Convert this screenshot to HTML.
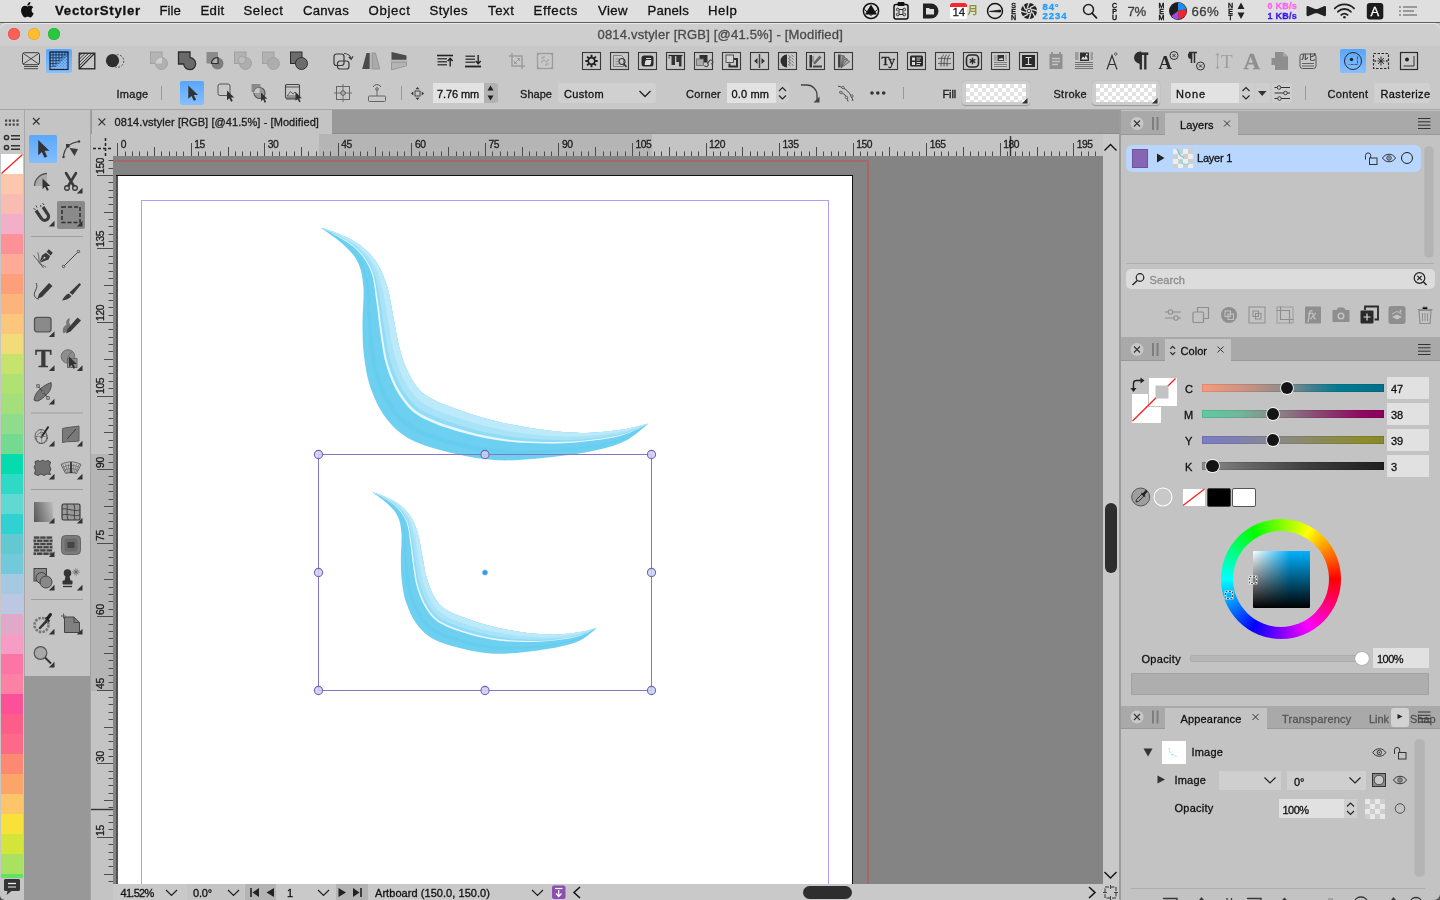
<!DOCTYPE html>
<html><head><meta charset="utf-8"><title>VectorStyler</title>
<style>
html,body{margin:0;padding:0;}
body{width:1440px;height:900px;overflow:hidden;position:relative;background:#c4c4c4;font-family:'Liberation Sans',sans-serif;-webkit-font-smoothing:antialiased;}
#root div{-webkit-text-stroke:0.3px;}
#root{position:absolute;left:0;top:0;width:1440px;height:900px;overflow:hidden;will-change:transform;}
</style></head><body><div id="root">
<!-- s_canvas -->
<div style="position:absolute;left:91px;top:110px;width:1029px;height:24px;background:#999;"></div><div style="position:absolute;left:92px;top:110px;width:240px;height:24px;background:#c4c4c4;"></div><div style="position:absolute;left:332px;top:133px;width:788px;height:1px;background:#8c8c8c;"></div><div style="position:absolute;left:114.5px;top:114.5px;white-space:nowrap;font-size:11px;line-height:15px;color:#1c1c1c;font-weight:400;letter-spacing:0.080px;">0814.vstyler [RGB] [@41.5%] - [Modified]</div><svg style="position:absolute;left:97px;top:117px;overflow:visible;" width="10" height="10" viewBox="0 0 10 10"><path d="M1.500,1.500L8.300,8.300M8.300,1.500L1.500,8.300" stroke="#333" stroke-width="1.100" fill="none"/></svg><div style="position:absolute;left:91px;top:134px;width:1012px;height:22px;background:#c4c4c4;"></div><div style="position:absolute;left:318.5px;top:134px;width:333.5px;height:22px;background:#b5b5b5;"></div><div style="position:absolute;left:91px;top:156px;width:22px;height:728px;background:#c4c4c4;"></div><div style="position:absolute;left:91px;top:454px;width:22px;height:236.5px;background:#b5b5b5;"></div><div style="position:absolute;left:113px;top:156px;width:990px;height:728px;background:#848484;"></div><div style="position:absolute;left:116.2px;top:174.8px;width:736.8px;height:725px;background:#111;"></div><div style="position:absolute;left:116.2px;top:176px;width:1.8px;height:724px;background:#505050;"></div><div style="position:absolute;left:118px;top:176px;width:734px;height:724px;background:#fff;"></div><div style="position:absolute;left:141.2px;top:199.6px;width:687.6px;height:701px;border:1.400px solid #b29cfb;box-sizing:border-box;"></div><div style="position:absolute;left:113px;top:160px;width:755.5px;height:2px;background:#a46868;"></div><div style="position:absolute;left:866.5px;top:160px;width:2px;height:724px;background:#a46868;"></div><svg style="position:absolute;left:0px;top:0px;overflow:visible;" width="1440" height="900" viewBox="0 0 1440 900"><defs><filter id="sb" x="-5%" y="-5%" width="110%" height="110%"><feGaussianBlur stdDeviation="0.450"/></filter></defs><g filter="url(#sb)"><path d="M320.4,227.4C324.0,230.1 336.0,237.8 342.2,243.6C348.4,249.4 354.3,254.9 357.8,262.2C361.3,269.4 362.6,276.7 363.4,287.1C364.2,297.5 362.4,313.1 362.5,324.5C362.6,335.9 362.7,345.2 364.0,355.6C365.3,366.0 366.6,376.3 370.2,386.7C373.8,397.1 379.1,409.0 385.8,417.8C392.6,426.6 399.3,433.6 410.7,439.6C422.1,445.6 439.7,450.2 454.2,453.6C468.7,457.1 482.8,459.6 497.8,460.3C512.9,461.0 529.0,459.3 544.5,457.8C560.0,456.3 577.9,453.9 591.1,451.2C604.4,448.5 614.4,446.1 624.0,441.5C633.6,436.9 644.6,426.4 648.7,423.4L648.7,423.4C644.3,424.4 631.9,428.1 622.3,429.6C612.7,431.2 601.5,432.3 591.1,432.7C580.7,433.1 572.4,433.0 560.0,431.8C547.6,430.6 531.0,428.5 516.5,425.6C502.0,422.8 487.4,419.4 472.9,414.7C458.4,410.0 439.7,403.8 429.3,397.6C418.9,391.4 415.6,385.4 410.7,377.3C405.8,369.2 402.6,359.2 399.8,349.3C397.0,339.4 395.7,328.6 393.6,318.2C391.5,307.8 390.2,296.4 387.3,287.1C384.4,277.8 381.4,269.4 376.5,262.2C371.6,254.9 364.6,248.5 357.8,243.6C351.1,238.7 342.2,235.4 336.0,232.7C329.8,230.0 323.0,228.3 320.4,227.4Z" fill="#6dd0f1"/><path d="M320.4,227.4C323.8,229.7 334.6,236.1 340.8,241.2C347.1,246.3 353.6,251.4 357.8,258.2C362.0,264.9 364.5,272.1 366.2,281.9C367.8,291.7 366.8,306.0 367.4,317.0C368.1,328.1 368.4,337.9 369.8,348.3C371.2,358.7 372.4,369.2 375.9,379.5C379.4,389.8 384.2,401.3 390.6,410.0C397.0,418.7 403.0,425.6 414.2,431.7C425.4,437.7 443.1,442.7 457.7,446.4C472.2,450.1 486.4,452.7 501.3,453.7C516.3,454.8 532.5,453.8 547.5,452.8C562.4,451.8 578.4,449.8 591.1,447.6C603.8,445.3 614.1,443.2 623.7,439.2C633.3,435.2 644.5,426.0 648.7,423.4L648.7,423.4C644.5,425.8 633.1,434.2 623.5,437.9C613.9,441.6 603.5,443.5 591.1,445.5C578.7,447.5 563.8,449.2 549.2,449.9C534.6,450.7 518.3,451.3 503.4,450.0C488.4,448.7 474.2,446.1 459.7,442.3C445.1,438.4 427.3,433.2 416.2,427.1C405.2,421.0 399.5,414.2 393.3,405.5C387.2,396.9 382.5,385.6 379.2,375.4C375.8,365.1 374.6,354.5 373.1,344.1C371.6,333.6 371.2,323.6 370.3,312.8C369.4,301.9 369.8,288.4 367.7,278.9C365.6,269.4 362.4,262.4 357.8,255.9C353.2,249.3 346.3,244.6 340.1,239.8C333.8,235.1 323.7,229.5 320.4,227.4Z" fill="#63cbee" fill-opacity="0.6"/><path d="M320.4,227.4C323.4,229.0 332.1,232.9 338.3,236.7C344.5,240.6 352.3,244.8 357.8,250.7C363.3,256.6 368.1,263.4 371.3,272.2C374.4,280.9 375.1,292.8 376.6,303.2C378.2,313.6 378.9,324.2 380.6,334.7C382.2,345.1 383.3,356.0 386.5,366.1C389.6,376.3 393.8,387.1 399.5,395.5C405.2,404.0 410.0,410.7 420.7,416.9C431.5,423.2 449.6,428.9 464.1,433.0C478.6,437.1 493.1,439.8 507.9,441.6C522.7,443.3 539.2,443.6 553.0,443.5C566.9,443.4 579.4,442.3 591.1,440.8C602.8,439.4 613.5,437.9 623.1,435.0C632.7,432.0 644.4,425.3 648.7,423.4L648.7,423.4C644.3,424.4 631.9,428.1 622.3,429.6C612.7,431.2 601.5,432.3 591.1,432.7C580.7,433.1 572.4,433.0 560.0,431.8C547.6,430.6 531.0,428.5 516.5,425.6C502.0,422.8 487.4,419.4 472.9,414.7C458.4,410.0 439.7,403.8 429.3,397.6C418.9,391.4 415.6,385.4 410.7,377.3C405.8,369.2 402.6,359.2 399.8,349.3C397.0,339.4 395.7,328.6 393.6,318.2C391.5,307.8 390.2,296.4 387.3,287.1C384.4,277.8 381.4,269.4 376.5,262.2C371.6,254.9 364.6,248.5 357.8,243.6C351.1,238.7 342.2,235.4 336.0,232.7C329.8,230.0 323.0,228.3 320.4,227.4Z" fill="#90dbf5"/><path d="M320.4,227.4C323.3,228.8 331.4,232.0 337.6,235.5C343.8,239.0 351.9,242.9 357.8,248.5C363.7,254.2 369.2,260.9 372.8,269.2C376.5,277.5 377.9,288.3 379.8,298.4C381.8,308.4 382.7,319.3 384.5,329.7C386.3,340.2 387.4,351.0 390.5,361.1C393.5,371.1 397.4,381.7 402.9,390.1C408.3,398.4 412.7,404.9 423.3,411.1C434.0,417.4 452.2,423.2 466.7,427.5C481.3,431.8 495.8,434.7 510.5,436.8C525.2,438.9 541.7,439.7 555.1,440.0C568.6,440.3 579.8,439.5 591.1,438.4C602.4,437.3 613.2,435.8 622.8,433.3C632.4,430.8 644.4,425.1 648.7,423.4L648.7,423.4C644.3,424.4 631.9,428.1 622.3,429.6C612.7,431.2 601.5,432.3 591.1,432.7C580.7,433.1 572.4,433.0 560.0,431.8C547.6,430.6 531.0,428.5 516.5,425.6C502.0,422.8 487.4,419.4 472.9,414.7C458.4,410.0 439.7,403.8 429.3,397.6C418.9,391.4 415.6,385.4 410.7,377.3C405.8,369.2 402.6,359.2 399.8,349.3C397.0,339.4 395.7,328.6 393.6,318.2C391.5,307.8 390.2,296.4 387.3,287.1C384.4,277.8 381.4,269.4 376.5,262.2C371.6,254.9 364.6,248.5 357.8,243.6C351.1,238.7 342.2,235.4 336.0,232.7C329.8,230.0 323.0,228.3 320.4,227.4Z" fill="#a8e3f8"/><path d="M320.4,227.4C323.1,228.5 330.6,231.1 336.9,234.2C343.1,237.4 351.5,241.0 357.8,246.3C364.1,251.6 370.3,258.2 374.5,266.0C378.8,273.8 380.9,283.5 383.2,293.2C385.6,303.0 386.7,314.0 388.7,324.5C390.6,334.9 391.8,345.7 394.7,355.7C397.7,365.7 401.2,376.0 406.4,384.2C411.7,392.4 415.5,398.7 426.0,404.9C436.6,411.2 455.0,417.2 469.6,421.6C484.1,426.1 498.6,429.2 513.2,431.7C527.9,434.1 544.4,435.6 557.3,436.2C570.3,436.9 580.2,436.6 591.1,435.8C602.0,435.0 613.0,433.7 622.6,431.6C632.2,429.6 644.3,424.8 648.7,423.4L648.7,423.4C644.3,424.4 631.9,428.1 622.3,429.6C612.7,431.2 601.5,432.3 591.1,432.7C580.7,433.1 572.4,433.0 560.0,431.8C547.6,430.6 531.0,428.5 516.5,425.6C502.0,422.8 487.4,419.4 472.9,414.7C458.4,410.0 439.7,403.8 429.3,397.6C418.9,391.4 415.6,385.4 410.7,377.3C405.8,369.2 402.6,359.2 399.8,349.3C397.0,339.4 395.7,328.6 393.6,318.2C391.5,307.8 390.2,296.4 387.3,287.1C384.4,277.8 381.4,269.4 376.5,262.2C371.6,254.9 364.6,248.5 357.8,243.6C351.1,238.7 342.2,235.4 336.0,232.7C329.8,230.0 323.0,228.3 320.4,227.4Z" fill="#bdeafa"/><path d="M320.4,227.4C323.4,229.0 332.1,232.9 338.3,236.7C344.5,240.6 352.3,244.8 357.8,250.7C363.3,256.6 368.1,263.4 371.3,272.2C374.4,280.9 375.1,292.8 376.6,303.2C378.2,313.6 378.9,324.2 380.6,334.7C382.2,345.1 383.3,356.0 386.5,366.1C389.6,376.3 393.8,387.1 399.5,395.5C405.2,404.0 410.0,410.7 420.7,416.9C431.5,423.2 449.6,428.9 464.1,433.0C478.6,437.1 493.1,439.8 507.9,441.6C522.7,443.3 539.2,443.6 553.0,443.5C566.9,443.4 579.4,442.3 591.1,440.8C602.8,439.4 613.5,437.9 623.1,435.0C632.7,432.0 644.4,425.3 648.7,423.4L648.7,423.4C644.4,425.2 632.6,431.6 623.0,434.3C613.4,437.0 602.6,438.5 591.1,439.8C579.6,441.1 567.6,442.1 553.9,442.1C540.2,442.0 523.7,441.5 508.9,439.7C494.1,437.8 479.7,435.0 465.1,430.8C450.6,426.7 432.5,420.9 421.8,414.6C411.1,408.4 406.5,401.7 400.9,393.3C395.3,384.9 391.2,374.2 388.1,364.1C385.0,354.0 383.9,343.1 382.2,332.6C380.5,322.1 379.7,311.4 378.0,301.1C376.3,290.8 375.3,279.4 372.0,270.8C368.6,262.2 363.5,255.4 357.8,249.6C352.1,243.9 344.2,239.8 338.0,236.1C331.7,232.4 323.3,228.9 320.4,227.4Z" fill="#e6f7fd"/></g><g transform="translate(372,492) scale(0.685,0.694) translate(-320.4,-227.4)"><g filter="url(#sb)"><path d="M320.4,227.4C324.0,230.1 336.0,237.8 342.2,243.6C348.4,249.4 354.3,254.9 357.8,262.2C361.3,269.4 362.6,276.7 363.4,287.1C364.2,297.5 362.4,313.1 362.5,324.5C362.6,335.9 362.7,345.2 364.0,355.6C365.3,366.0 366.6,376.3 370.2,386.7C373.8,397.1 379.1,409.0 385.8,417.8C392.6,426.6 399.3,433.6 410.7,439.6C422.1,445.6 439.7,450.2 454.2,453.6C468.7,457.1 482.8,459.6 497.8,460.3C512.9,461.0 529.0,459.3 544.5,457.8C560.0,456.3 577.9,453.9 591.1,451.2C604.4,448.5 614.4,446.1 624.0,441.5C633.6,436.9 644.6,426.4 648.7,423.4L648.7,423.4C644.3,424.4 631.9,428.1 622.3,429.6C612.7,431.2 601.5,432.3 591.1,432.7C580.7,433.1 572.4,433.0 560.0,431.8C547.6,430.6 531.0,428.5 516.5,425.6C502.0,422.8 487.4,419.4 472.9,414.7C458.4,410.0 439.7,403.8 429.3,397.6C418.9,391.4 415.6,385.4 410.7,377.3C405.8,369.2 402.6,359.2 399.8,349.3C397.0,339.4 395.7,328.6 393.6,318.2C391.5,307.8 390.2,296.4 387.3,287.1C384.4,277.8 381.4,269.4 376.5,262.2C371.6,254.9 364.6,248.5 357.8,243.6C351.1,238.7 342.2,235.4 336.0,232.7C329.8,230.0 323.0,228.3 320.4,227.4Z" fill="#6dd0f1"/><path d="M320.4,227.4C323.8,229.7 334.6,236.1 340.8,241.2C347.1,246.3 353.6,251.4 357.8,258.2C362.0,264.9 364.5,272.1 366.2,281.9C367.8,291.7 366.8,306.0 367.4,317.0C368.1,328.1 368.4,337.9 369.8,348.3C371.2,358.7 372.4,369.2 375.9,379.5C379.4,389.8 384.2,401.3 390.6,410.0C397.0,418.7 403.0,425.6 414.2,431.7C425.4,437.7 443.1,442.7 457.7,446.4C472.2,450.1 486.4,452.7 501.3,453.7C516.3,454.8 532.5,453.8 547.5,452.8C562.4,451.8 578.4,449.8 591.1,447.6C603.8,445.3 614.1,443.2 623.7,439.2C633.3,435.2 644.5,426.0 648.7,423.4L648.7,423.4C644.5,425.8 633.1,434.2 623.5,437.9C613.9,441.6 603.5,443.5 591.1,445.5C578.7,447.5 563.8,449.2 549.2,449.9C534.6,450.7 518.3,451.3 503.4,450.0C488.4,448.7 474.2,446.1 459.7,442.3C445.1,438.4 427.3,433.2 416.2,427.1C405.2,421.0 399.5,414.2 393.3,405.5C387.2,396.9 382.5,385.6 379.2,375.4C375.8,365.1 374.6,354.5 373.1,344.1C371.6,333.6 371.2,323.6 370.3,312.8C369.4,301.9 369.8,288.4 367.7,278.9C365.6,269.4 362.4,262.4 357.8,255.9C353.2,249.3 346.3,244.6 340.1,239.8C333.8,235.1 323.7,229.5 320.4,227.4Z" fill="#63cbee" fill-opacity="0.6"/><path d="M320.4,227.4C323.4,229.0 332.1,232.9 338.3,236.7C344.5,240.6 352.3,244.8 357.8,250.7C363.3,256.6 368.1,263.4 371.3,272.2C374.4,280.9 375.1,292.8 376.6,303.2C378.2,313.6 378.9,324.2 380.6,334.7C382.2,345.1 383.3,356.0 386.5,366.1C389.6,376.3 393.8,387.1 399.5,395.5C405.2,404.0 410.0,410.7 420.7,416.9C431.5,423.2 449.6,428.9 464.1,433.0C478.6,437.1 493.1,439.8 507.9,441.6C522.7,443.3 539.2,443.6 553.0,443.5C566.9,443.4 579.4,442.3 591.1,440.8C602.8,439.4 613.5,437.9 623.1,435.0C632.7,432.0 644.4,425.3 648.7,423.4L648.7,423.4C644.3,424.4 631.9,428.1 622.3,429.6C612.7,431.2 601.5,432.3 591.1,432.7C580.7,433.1 572.4,433.0 560.0,431.8C547.6,430.6 531.0,428.5 516.5,425.6C502.0,422.8 487.4,419.4 472.9,414.7C458.4,410.0 439.7,403.8 429.3,397.6C418.9,391.4 415.6,385.4 410.7,377.3C405.8,369.2 402.6,359.2 399.8,349.3C397.0,339.4 395.7,328.6 393.6,318.2C391.5,307.8 390.2,296.4 387.3,287.1C384.4,277.8 381.4,269.4 376.5,262.2C371.6,254.9 364.6,248.5 357.8,243.6C351.1,238.7 342.2,235.4 336.0,232.7C329.8,230.0 323.0,228.3 320.4,227.4Z" fill="#90dbf5"/><path d="M320.4,227.4C323.3,228.8 331.4,232.0 337.6,235.5C343.8,239.0 351.9,242.9 357.8,248.5C363.7,254.2 369.2,260.9 372.8,269.2C376.5,277.5 377.9,288.3 379.8,298.4C381.8,308.4 382.7,319.3 384.5,329.7C386.3,340.2 387.4,351.0 390.5,361.1C393.5,371.1 397.4,381.7 402.9,390.1C408.3,398.4 412.7,404.9 423.3,411.1C434.0,417.4 452.2,423.2 466.7,427.5C481.3,431.8 495.8,434.7 510.5,436.8C525.2,438.9 541.7,439.7 555.1,440.0C568.6,440.3 579.8,439.5 591.1,438.4C602.4,437.3 613.2,435.8 622.8,433.3C632.4,430.8 644.4,425.1 648.7,423.4L648.7,423.4C644.3,424.4 631.9,428.1 622.3,429.6C612.7,431.2 601.5,432.3 591.1,432.7C580.7,433.1 572.4,433.0 560.0,431.8C547.6,430.6 531.0,428.5 516.5,425.6C502.0,422.8 487.4,419.4 472.9,414.7C458.4,410.0 439.7,403.8 429.3,397.6C418.9,391.4 415.6,385.4 410.7,377.3C405.8,369.2 402.6,359.2 399.8,349.3C397.0,339.4 395.7,328.6 393.6,318.2C391.5,307.8 390.2,296.4 387.3,287.1C384.4,277.8 381.4,269.4 376.5,262.2C371.6,254.9 364.6,248.5 357.8,243.6C351.1,238.7 342.2,235.4 336.0,232.7C329.8,230.0 323.0,228.3 320.4,227.4Z" fill="#a8e3f8"/><path d="M320.4,227.4C323.1,228.5 330.6,231.1 336.9,234.2C343.1,237.4 351.5,241.0 357.8,246.3C364.1,251.6 370.3,258.2 374.5,266.0C378.8,273.8 380.9,283.5 383.2,293.2C385.6,303.0 386.7,314.0 388.7,324.5C390.6,334.9 391.8,345.7 394.7,355.7C397.7,365.7 401.2,376.0 406.4,384.2C411.7,392.4 415.5,398.7 426.0,404.9C436.6,411.2 455.0,417.2 469.6,421.6C484.1,426.1 498.6,429.2 513.2,431.7C527.9,434.1 544.4,435.6 557.3,436.2C570.3,436.9 580.2,436.6 591.1,435.8C602.0,435.0 613.0,433.7 622.6,431.6C632.2,429.6 644.3,424.8 648.7,423.4L648.7,423.4C644.3,424.4 631.9,428.1 622.3,429.6C612.7,431.2 601.5,432.3 591.1,432.7C580.7,433.1 572.4,433.0 560.0,431.8C547.6,430.6 531.0,428.5 516.5,425.6C502.0,422.8 487.4,419.4 472.9,414.7C458.4,410.0 439.7,403.8 429.3,397.6C418.9,391.4 415.6,385.4 410.7,377.3C405.8,369.2 402.6,359.2 399.8,349.3C397.0,339.4 395.7,328.6 393.6,318.2C391.5,307.8 390.2,296.4 387.3,287.1C384.4,277.8 381.4,269.4 376.5,262.2C371.6,254.9 364.6,248.5 357.8,243.6C351.1,238.7 342.2,235.4 336.0,232.7C329.8,230.0 323.0,228.3 320.4,227.4Z" fill="#bdeafa"/><path d="M320.4,227.4C323.4,229.0 332.1,232.9 338.3,236.7C344.5,240.6 352.3,244.8 357.8,250.7C363.3,256.6 368.1,263.4 371.3,272.2C374.4,280.9 375.1,292.8 376.6,303.2C378.2,313.6 378.9,324.2 380.6,334.7C382.2,345.1 383.3,356.0 386.5,366.1C389.6,376.3 393.8,387.1 399.5,395.5C405.2,404.0 410.0,410.7 420.7,416.9C431.5,423.2 449.6,428.9 464.1,433.0C478.6,437.1 493.1,439.8 507.9,441.6C522.7,443.3 539.2,443.6 553.0,443.5C566.9,443.4 579.4,442.3 591.1,440.8C602.8,439.4 613.5,437.9 623.1,435.0C632.7,432.0 644.4,425.3 648.7,423.4L648.7,423.4C644.4,425.2 632.6,431.6 623.0,434.3C613.4,437.0 602.6,438.5 591.1,439.8C579.6,441.1 567.6,442.1 553.9,442.1C540.2,442.0 523.7,441.5 508.9,439.7C494.1,437.8 479.7,435.0 465.1,430.8C450.6,426.7 432.5,420.9 421.8,414.6C411.1,408.4 406.5,401.7 400.9,393.3C395.3,384.9 391.2,374.2 388.1,364.1C385.0,354.0 383.9,343.1 382.2,332.6C380.5,322.1 379.7,311.4 378.0,301.1C376.3,290.8 375.3,279.4 372.0,270.8C368.6,262.2 363.5,255.4 357.8,249.6C352.1,243.9 344.2,239.8 338.0,236.1C331.7,232.4 323.3,228.9 320.4,227.4Z" fill="#e6f7fd"/></g></g><rect x="318.5" y="454.5" width="333" height="236" fill="none" stroke="#8674c4" stroke-width="1"/><circle cx="318.5" cy="454.5" r="4.100" fill="#c9d2ee" fill-opacity="0.850" stroke="#7a62b8" stroke-width="1.100"/><circle cx="485" cy="454.5" r="4.100" fill="#c9d2ee" fill-opacity="0.850" stroke="#7a62b8" stroke-width="1.100"/><circle cx="651.5" cy="454.5" r="4.100" fill="#c9d2ee" fill-opacity="0.850" stroke="#7a62b8" stroke-width="1.100"/><circle cx="318.5" cy="572.5" r="4.100" fill="#c9d2ee" fill-opacity="0.850" stroke="#7a62b8" stroke-width="1.100"/><circle cx="651.5" cy="572.5" r="4.100" fill="#c9d2ee" fill-opacity="0.850" stroke="#7a62b8" stroke-width="1.100"/><circle cx="318.5" cy="690.5" r="4.100" fill="#c9d2ee" fill-opacity="0.850" stroke="#7a62b8" stroke-width="1.100"/><circle cx="485" cy="690.5" r="4.100" fill="#c9d2ee" fill-opacity="0.850" stroke="#7a62b8" stroke-width="1.100"/><circle cx="651.5" cy="690.5" r="4.100" fill="#c9d2ee" fill-opacity="0.850" stroke="#7a62b8" stroke-width="1.100"/><circle cx="485" cy="572.5" r="2.6" fill="#2d9fe6" stroke="#7fb4e8" stroke-width="0.6"/><path d="M117.5,143V156M125.5,151.5V156M132.5,151.5V156M139.5,151.5V156M147.5,151.5V156M154.5,147V156M161.5,151.5V156M169.5,151.5V156M176.5,151.5V156M183.5,151.5V156M191.5,143V156M198.5,151.5V156M205.5,151.5V156M213.5,151.5V156M220.5,151.5V156M228.5,147V156M235.5,151.5V156M242.5,151.5V156M250.5,151.5V156M257.5,151.5V156M264.5,143V156M272.5,151.5V156M279.5,151.5V156M286.5,151.5V156M294.5,151.5V156M301.5,147V156M308.5,151.5V156M316.5,151.5V156M323.5,151.5V156M330.5,151.5V156M338.5,143V156M345.5,151.5V156M353.5,151.5V156M360.5,151.5V156M367.5,151.5V156M375.5,147V156M382.5,151.5V156M389.5,151.5V156M397.5,151.5V156M404.5,151.5V156M411.5,143V156M419.5,151.5V156M426.5,151.5V156M433.5,151.5V156M441.5,151.5V156M448.5,147V156M456.5,151.5V156M463.5,151.5V156M470.5,151.5V156M478.5,151.5V156M485.5,143V156M492.5,151.5V156M500.5,151.5V156M507.5,151.5V156M514.5,151.5V156M522.5,147V156M529.5,151.5V156M536.5,151.5V156M544.5,151.5V156M551.5,151.5V156M558.5,143V156M566.5,151.5V156M573.5,151.5V156M581.5,151.5V156M588.5,151.5V156M595.5,147V156M603.5,151.5V156M610.5,151.5V156M617.5,151.5V156M625.5,151.5V156M632.5,143V156M639.5,151.5V156M647.5,151.5V156M654.5,151.5V156M661.5,151.5V156M669.5,147V156M676.5,151.5V156M684.5,151.5V156M691.5,151.5V156M698.5,151.5V156M706.5,143V156M713.5,151.5V156M720.5,151.5V156M728.5,151.5V156M735.5,151.5V156M742.5,147V156M750.5,151.5V156M757.5,151.5V156M764.5,151.5V156M772.5,151.5V156M779.5,143V156M787.5,151.5V156M794.5,151.5V156M801.5,151.5V156M809.5,151.5V156M816.5,147V156M823.5,151.5V156M831.5,151.5V156M838.5,151.5V156M845.5,151.5V156M853.5,143V156M860.5,151.5V156M867.5,151.5V156M875.5,151.5V156M882.5,151.5V156M889.5,147V156M897.5,151.5V156M904.5,151.5V156M912.5,151.5V156M919.5,151.5V156M926.5,143V156M934.5,151.5V156M941.5,151.5V156M948.5,151.5V156M956.5,151.5V156M963.5,147V156M970.5,151.5V156M978.5,151.5V156M985.5,151.5V156M992.5,151.5V156M1000.5,143V156M1007.5,151.5V156M1015.5,151.5V156M1022.5,151.5V156M1029.5,151.5V156M1037.5,147V156M1044.5,151.5V156M1051.5,151.5V156M1059.5,151.5V156M1066.5,151.5V156M1073.5,143V156M1081.5,151.5V156M1088.5,151.5V156M1095.5,151.5V156" stroke="#4c4c4c" stroke-width="1" fill="none"/><path d="M108.5,160.5H113M108.5,168.5H113M97,175.5H113M108.5,182.5H113M108.5,190.5H113M108.5,197.5H113M108.5,204.5H113M104,212.5H113M108.5,219.5H113M108.5,226.5H113M108.5,234.5H113M108.5,241.5H113M97,248.5H113M108.5,256.5H113M108.5,263.5H113M108.5,271.5H113M108.5,278.5H113M104,285.5H113M108.5,293.5H113M108.5,300.5H113M108.5,307.5H113M108.5,315.5H113M97,322.5H113M108.5,329.5H113M108.5,337.5H113M108.5,344.5H113M108.5,351.5H113M104,359.5H113M108.5,366.5H113M108.5,373.5H113M108.5,381.5H113M108.5,388.5H113M97,396.5H113M108.5,403.5H113M108.5,410.5H113M108.5,418.5H113M108.5,425.5H113M104,432.5H113M108.5,440.5H113M108.5,447.5H113M108.5,454.5H113M108.5,462.5H113M97,469.5H113M108.5,476.5H113M108.5,484.5H113M108.5,491.5H113M108.5,499.5H113M104,506.5H113M108.5,513.5H113M108.5,521.5H113M108.5,528.5H113M108.5,535.5H113M97,543.5H113M108.5,550.5H113M108.5,557.5H113M108.5,565.5H113M108.5,572.5H113M104,579.5H113M108.5,587.5H113M108.5,594.5H113M108.5,601.5H113M108.5,609.5H113M97,616.5H113M108.5,624.5H113M108.5,631.5H113M108.5,638.5H113M108.5,646.5H113M104,653.5H113M108.5,660.5H113M108.5,668.5H113M108.5,675.5H113M108.5,682.5H113M97,690.5H113M108.5,697.5H113M108.5,704.5H113M108.5,712.5H113M108.5,719.5H113M104,727.5H113M108.5,734.5H113M108.5,741.5H113M108.5,749.5H113M108.5,756.5H113M97,763.5H113M108.5,771.5H113M108.5,778.5H113M108.5,785.5H113M108.5,793.5H113M104,800.5H113M108.5,807.5H113M108.5,815.5H113M108.5,822.5H113M108.5,829.5H113M97,837.5H113M108.5,844.5H113M108.5,852.5H113M108.5,859.5H113M108.5,866.5H113M104,874.5H113M108.5,881.5H113" stroke="#4c4c4c" stroke-width="1" fill="none"/><path d="M105.5,138V157M93,148.5H112" stroke="#222" stroke-width="1.500" stroke-dasharray="3,2" fill="none"/><path d="M1010.5,136V156" stroke="#333" stroke-width="1.4"/><path d="M91,809.5H113" stroke="#333" stroke-width="1.4"/></svg><div style="position:absolute;left:120.7px;top:138.2px;white-space:nowrap;font-size:10.3px;line-height:14.3px;color:#1c1c1c;font-weight:400;letter-spacing:0.000px;letter-spacing:-0.450px;">0</div><div style="position:absolute;left:194.2px;top:138.2px;white-space:nowrap;font-size:10.3px;line-height:14.3px;color:#1c1c1c;font-weight:400;letter-spacing:0.000px;letter-spacing:-0.450px;">15</div><div style="position:absolute;left:267.8px;top:138.2px;white-space:nowrap;font-size:10.3px;line-height:14.3px;color:#1c1c1c;font-weight:400;letter-spacing:0.000px;letter-spacing:-0.450px;">30</div><div style="position:absolute;left:341.3px;top:138.2px;white-space:nowrap;font-size:10.3px;line-height:14.3px;color:#1c1c1c;font-weight:400;letter-spacing:0.000px;letter-spacing:-0.450px;">45</div><div style="position:absolute;left:414.9px;top:138.2px;white-space:nowrap;font-size:10.3px;line-height:14.3px;color:#1c1c1c;font-weight:400;letter-spacing:0.000px;letter-spacing:-0.450px;">60</div><div style="position:absolute;left:488.4px;top:138.2px;white-space:nowrap;font-size:10.3px;line-height:14.3px;color:#1c1c1c;font-weight:400;letter-spacing:0.000px;letter-spacing:-0.450px;">75</div><div style="position:absolute;left:562.0px;top:138.2px;white-space:nowrap;font-size:10.3px;line-height:14.3px;color:#1c1c1c;font-weight:400;letter-spacing:0.000px;letter-spacing:-0.450px;">90</div><div style="position:absolute;left:635.5px;top:138.2px;white-space:nowrap;font-size:10.3px;line-height:14.3px;color:#1c1c1c;font-weight:400;letter-spacing:0.000px;letter-spacing:-0.450px;">105</div><div style="position:absolute;left:709.1px;top:138.2px;white-space:nowrap;font-size:10.3px;line-height:14.3px;color:#1c1c1c;font-weight:400;letter-spacing:0.000px;letter-spacing:-0.450px;">120</div><div style="position:absolute;left:782.6px;top:138.2px;white-space:nowrap;font-size:10.3px;line-height:14.3px;color:#1c1c1c;font-weight:400;letter-spacing:0.000px;letter-spacing:-0.450px;">135</div><div style="position:absolute;left:856.2px;top:138.2px;white-space:nowrap;font-size:10.3px;line-height:14.3px;color:#1c1c1c;font-weight:400;letter-spacing:0.000px;letter-spacing:-0.450px;">150</div><div style="position:absolute;left:929.7px;top:138.2px;white-space:nowrap;font-size:10.3px;line-height:14.3px;color:#1c1c1c;font-weight:400;letter-spacing:0.000px;letter-spacing:-0.450px;">165</div><div style="position:absolute;left:1003.3px;top:138.2px;white-space:nowrap;font-size:10.3px;line-height:14.3px;color:#1c1c1c;font-weight:400;letter-spacing:0.000px;letter-spacing:-0.450px;">180</div><div style="position:absolute;left:1076.8px;top:138.2px;white-space:nowrap;font-size:10.3px;line-height:14.3px;color:#1c1c1c;font-weight:400;letter-spacing:0.000px;letter-spacing:-0.450px;">195</div><div style="position:absolute;left:91px;top:157.5px;width:22px;height:726.5px;overflow:hidden;"><div style="position:absolute;left:3px;top:16.2px;width:0;height:0;"><div style="position:absolute;left:0;top:0;transform-origin:0 0;transform:rotate(-90deg);white-space:nowrap;font-size:10.3px;line-height:14px;color:#1c1c1c;letter-spacing:-0.300px;">150</div></div><div style="position:absolute;left:3px;top:89.7px;width:0;height:0;"><div style="position:absolute;left:0;top:0;transform-origin:0 0;transform:rotate(-90deg);white-space:nowrap;font-size:10.3px;line-height:14px;color:#1c1c1c;letter-spacing:-0.300px;">135</div></div><div style="position:absolute;left:3px;top:163.3px;width:0;height:0;"><div style="position:absolute;left:0;top:0;transform-origin:0 0;transform:rotate(-90deg);white-space:nowrap;font-size:10.3px;line-height:14px;color:#1c1c1c;letter-spacing:-0.300px;">120</div></div><div style="position:absolute;left:3px;top:236.8px;width:0;height:0;"><div style="position:absolute;left:0;top:0;transform-origin:0 0;transform:rotate(-90deg);white-space:nowrap;font-size:10.3px;line-height:14px;color:#1c1c1c;letter-spacing:-0.300px;">105</div></div><div style="position:absolute;left:3px;top:310.4px;width:0;height:0;"><div style="position:absolute;left:0;top:0;transform-origin:0 0;transform:rotate(-90deg);white-space:nowrap;font-size:10.3px;line-height:14px;color:#1c1c1c;letter-spacing:-0.300px;">90</div></div><div style="position:absolute;left:3px;top:383.9px;width:0;height:0;"><div style="position:absolute;left:0;top:0;transform-origin:0 0;transform:rotate(-90deg);white-space:nowrap;font-size:10.3px;line-height:14px;color:#1c1c1c;letter-spacing:-0.300px;">75</div></div><div style="position:absolute;left:3px;top:457.5px;width:0;height:0;"><div style="position:absolute;left:0;top:0;transform-origin:0 0;transform:rotate(-90deg);white-space:nowrap;font-size:10.3px;line-height:14px;color:#1c1c1c;letter-spacing:-0.300px;">60</div></div><div style="position:absolute;left:3px;top:531.0px;width:0;height:0;"><div style="position:absolute;left:0;top:0;transform-origin:0 0;transform:rotate(-90deg);white-space:nowrap;font-size:10.3px;line-height:14px;color:#1c1c1c;letter-spacing:-0.300px;">45</div></div><div style="position:absolute;left:3px;top:604.6px;width:0;height:0;"><div style="position:absolute;left:0;top:0;transform-origin:0 0;transform:rotate(-90deg);white-space:nowrap;font-size:10.3px;line-height:14px;color:#1c1c1c;letter-spacing:-0.300px;">30</div></div><div style="position:absolute;left:3px;top:678.1px;width:0;height:0;"><div style="position:absolute;left:0;top:0;transform-origin:0 0;transform:rotate(-90deg);white-space:nowrap;font-size:10.3px;line-height:14px;color:#1c1c1c;letter-spacing:-0.300px;">15</div></div></div>
<!-- s_menu -->
<div style="position:absolute;left:0px;top:0px;width:1440px;height:22px;background:#dfdfdf;"></div><div style="position:absolute;left:0px;top:21.5px;width:1440px;height:1.5px;background:#5c5c5c;"></div><div style="position:absolute;left:0px;top:23px;width:1440px;height:22.5px;background:#cecece;border-top-left-radius:6px;border-top-right-radius:6px;box-shadow:inset 0 1px 0 #eaeaea;"></div><svg style="position:absolute;left:0px;top:0px;overflow:visible;" width="40" height="22" viewBox="0 0 40 22"><g transform="translate(19.600,2) scale(0.646)"><path d="M12.152 6.896c-.948 0-2.415-1.078-3.960-1.040-2.040.027-3.910 1.183-4.961 3.014-2.117 3.675-.546 9.103 1.519 12.090 1.013 1.454 2.208 3.090 3.792 3.039 1.520-.065 2.090-.987 3.935-.987 1.831 0 2.350.987 3.960.948 1.637-.026 2.676-1.480 3.676-2.948 1.156-1.688 1.636-3.325 1.662-3.415-.039-.013-3.182-1.221-3.220-4.857-.026-3.040 2.480-4.494 2.597-4.559-1.429-2.090-3.623-2.324-4.390-2.376-2-.156-3.675 1.090-4.610 1.090zM15.530 3.830c.843-1.012 1.400-2.427 1.245-3.830-1.207.052-2.662.805-3.532 1.818-.780.896-1.454 2.338-1.273 3.714 1.338.104 2.715-.688 3.559-1.701" fill="#111"/></g></svg><div style="position:absolute;left:55px;top:2.2px;white-space:nowrap;font-size:13.2px;line-height:17.2px;color:#111;font-weight:700;letter-spacing:0.747px;">VectorStyler</div><div style="position:absolute;left:159.5px;top:2.2px;white-space:nowrap;font-size:13.2px;line-height:17.2px;color:#111;font-weight:400;letter-spacing:0.058px;">File</div><div style="position:absolute;left:200.5px;top:2.2px;white-space:nowrap;font-size:13.2px;line-height:17.2px;color:#111;font-weight:400;letter-spacing:0.314px;">Edit</div><div style="position:absolute;left:243.5px;top:2.2px;white-space:nowrap;font-size:13.2px;line-height:17.2px;color:#111;font-weight:400;letter-spacing:0.552px;">Select</div><div style="position:absolute;left:303px;top:2.2px;white-space:nowrap;font-size:13.2px;line-height:17.2px;color:#111;font-weight:400;letter-spacing:0.208px;">Canvas</div><div style="position:absolute;left:368.5px;top:2.2px;white-space:nowrap;font-size:13.2px;line-height:17.2px;color:#111;font-weight:400;letter-spacing:0.642px;">Object</div><div style="position:absolute;left:429.5px;top:2.2px;white-space:nowrap;font-size:13.2px;line-height:17.2px;color:#111;font-weight:400;letter-spacing:0.426px;">Styles</div><div style="position:absolute;left:488px;top:2.2px;white-space:nowrap;font-size:13.2px;line-height:17.2px;color:#111;font-weight:400;letter-spacing:0.573px;">Text</div><div style="position:absolute;left:533.5px;top:2.2px;white-space:nowrap;font-size:13.2px;line-height:17.2px;color:#111;font-weight:400;letter-spacing:0.627px;">Effects</div><div style="position:absolute;left:598px;top:2.2px;white-space:nowrap;font-size:13.2px;line-height:17.2px;color:#111;font-weight:400;letter-spacing:0.407px;">View</div><div style="position:absolute;left:647.5px;top:2.2px;white-space:nowrap;font-size:13.2px;line-height:17.2px;color:#111;font-weight:400;letter-spacing:0.190px;">Panels</div><div style="position:absolute;left:708px;top:2.2px;white-space:nowrap;font-size:13.2px;line-height:17.2px;color:#111;font-weight:400;letter-spacing:0.588px;">Help</div><div style="position:absolute;left:597.5px;top:26.0px;white-space:nowrap;font-size:13px;line-height:17px;color:#4a4a4a;font-weight:400;letter-spacing:0.190px;">0814.vstyler [RGB] [@41.5%] - [Modified]</div><div style="position:absolute;left:8px;top:28px;width:12px;height:12px;border-radius:50%;background:#ff5f57;box-shadow:inset 0 0 0 0.5px #e0443e;"></div><div style="position:absolute;left:28px;top:28px;width:12px;height:12px;border-radius:50%;background:#febc2e;box-shadow:inset 0 0 0 0.5px #dea123;"></div><div style="position:absolute;left:48px;top:28px;width:12px;height:12px;border-radius:50%;background:#28c840;box-shadow:inset 0 0 0 0.5px #1aab29;"></div><svg style="position:absolute;left:0px;top:0px;overflow:visible;" width="1440" height="23" viewBox="0 0 1440 23"><circle cx="871" cy="11" r="7.6" fill="none" stroke="#111" stroke-width="1.5"/><path d="M871,4.5L877,14.5H865Z" fill="#111"/><path d="M864.5,9.5l6.5,6M877.5,9.500l-6.5,6" stroke="#111" stroke-width="1" fill="none"/><rect x="894" y="4.5" width="14" height="14.5" rx="2" fill="none" stroke="#111" stroke-width="1.5"/><rect x="897.500" y="2" width="7" height="4" rx="1" fill="#111"/><path d="M899,9.500h4v5h-4zM899,9.500a1.300,1.300 0 1 0 -1.300,1.300M903,9.500a1.300,1.300 0 1 1 1.300,1.300M899,14.500a1.300,1.300 0 1 1 -1.300,-1.300M903,14.500a1.300,1.300 0 1 0 1.300,-1.300" stroke="#111" stroke-width="0.9" fill="none"/><path d="M923,3.500h8a7.500,7.500 0 0 1 0,15h-8z" fill="#222"/><path d="M926,8h3l1,1h4v5.500h-8z" fill="#dfdfdf"/><rect x="950" y="3" width="17" height="16" rx="2.500" fill="#fff"/><path d="M950,7V5.500a2.500,2.500 0 0 1 2.500,-2.500h12a2.500,2.500 0 0 1 2.500,2.500V7z" fill="#f4292f"/><circle cx="995" cy="11" r="7.500" fill="none" stroke="#111" stroke-width="1.400"/><path d="M989.500,11.500L1000.500,10L1000.500,12Z" fill="#111" stroke="#111" stroke-width="0.800"/><circle cx="1029" cy="11" r="8" fill="#222"/><circle cx="1029" cy="11" r="3.200" fill="#dfdfdf"/><circle cx="1029" cy="11" r="1.800" fill="none" stroke="#222" stroke-width="0.900"/><path d="M1032.44,12.06L1034.78,16.95" stroke="#dfdfdf" stroke-width="1.300"/><path d="M1030.68,14.18L1028.88,19.30" stroke="#dfdfdf" stroke-width="1.300"/><path d="M1027.94,14.44L1023.05,16.78" stroke="#dfdfdf" stroke-width="1.300"/><path d="M1025.82,12.68L1020.70,10.88" stroke="#dfdfdf" stroke-width="1.300"/><path d="M1025.56,9.94L1023.22,5.05" stroke="#dfdfdf" stroke-width="1.300"/><path d="M1027.32,7.82L1029.12,2.70" stroke="#dfdfdf" stroke-width="1.300"/><path d="M1030.06,7.56L1034.95,5.22" stroke="#dfdfdf" stroke-width="1.300"/><path d="M1032.18,9.32L1037.30,11.12" stroke="#dfdfdf" stroke-width="1.300"/><circle cx="1088.500" cy="9.500" r="5" fill="none" stroke="#222" stroke-width="1.500"/><path d="M1092,13.200L1096.500,17.800" stroke="#222" stroke-width="1.800" stroke-linecap="round"/><circle cx="1178" cy="11" r="9" fill="#1d1d1d"/><path d="M1178,11L1178,2.600A8.400,8.400 0 0 1 1186.200,9.200Z" fill="#1e8df2"/><path d="M1178,11L1186.200,9.200A8.400,8.400 0 0 1 1178.800,19.360Z" fill="#f6242a"/><path d="M1178,11L1178.800,19.360A8.400,8.400 0 0 1 1171.300,16Z" fill="#a04be0"/><path d="M1241,2.500L1244.500,9H1237.500ZM1241,19L1244.500,12.500H1237.500Z" fill="#222"/><path d="M1306.500,7.300C1306.500,6.200 1307.500,5.800 1308.500,6.200L1315,9H1317.500L1324,6.200C1325,5.800 1326,6.200 1326,7.300V15C1326,16 1325,16.500 1324,16L1317.500,13.200H1315L1308.500,16C1307.500,16.500 1306.500,16 1306.500,15Z" fill="#222"/><path d="M1334.800,8.400A13.500,13.500 0 0 1 1354,8.400" stroke="#222" stroke-width="1.900" fill="none" stroke-linecap="round"/><path d="M1338,11.700A9,9 0 0 1 1350.800,11.700" stroke="#222" stroke-width="1.900" fill="none" stroke-linecap="round"/><path d="M1341.300,14.900A4.500,4.500 0 0 1 1347.500,14.900" stroke="#222" stroke-width="1.900" fill="none" stroke-linecap="round"/><circle cx="1344.400" cy="17.300" r="1.300" fill="#222"/><rect x="1366.800" y="3" width="16.500" height="16.500" rx="3" fill="#1b1b1b"/><path d="M1403,7H1417M1403,11H1414M1403,15H1417" stroke="#9a9a9a" stroke-width="1.900"/><path d="M1399,7h2M1399,11h2M1399,15h2" stroke="#9a9a9a" stroke-width="1.900"/></svg><div style="position:absolute;left:952.5px;top:4.8px;white-space:nowrap;font-size:11.5px;line-height:15.5px;color:#222;font-weight:400;letter-spacing:-0.145px;">14</div><div style="position:absolute;left:967.500px;top:2px;font-size:10.500px;line-height:16px;-webkit-text-stroke:0.300px;color:#8c8c1c;font-family:'Liberation Sans','Noto Sans CJK JP',sans-serif;">月</div><div style="position:absolute;left:1009.5px;top:1.5px;width:8px;text-align:center;font-size:7px;line-height:7px;font-weight:400;color:#111;-webkit-text-stroke:0.400px;">S</div><div style="position:absolute;left:1009.5px;top:7.7px;width:8px;text-align:center;font-size:7px;line-height:7px;font-weight:400;color:#111;-webkit-text-stroke:0.400px;">E</div><div style="position:absolute;left:1009.5px;top:13.9px;width:8px;text-align:center;font-size:7px;line-height:7px;font-weight:400;color:#111;-webkit-text-stroke:0.400px;">N</div><div style="position:absolute;left:1110.5px;top:1.5px;width:8px;text-align:center;font-size:7px;line-height:7px;font-weight:400;color:#111;-webkit-text-stroke:0.400px;">C</div><div style="position:absolute;left:1110.5px;top:7.7px;width:8px;text-align:center;font-size:7px;line-height:7px;font-weight:400;color:#111;-webkit-text-stroke:0.400px;">P</div><div style="position:absolute;left:1110.5px;top:13.9px;width:8px;text-align:center;font-size:7px;line-height:7px;font-weight:400;color:#111;-webkit-text-stroke:0.400px;">U</div><div style="position:absolute;left:1157.5px;top:1.5px;width:8px;text-align:center;font-size:7px;line-height:7px;font-weight:400;color:#111;-webkit-text-stroke:0.400px;">M</div><div style="position:absolute;left:1157.5px;top:7.7px;width:8px;text-align:center;font-size:7px;line-height:7px;font-weight:400;color:#111;-webkit-text-stroke:0.400px;">E</div><div style="position:absolute;left:1157.5px;top:13.9px;width:8px;text-align:center;font-size:7px;line-height:7px;font-weight:400;color:#111;-webkit-text-stroke:0.400px;">M</div><div style="position:absolute;left:1226.5px;top:1.5px;width:8px;text-align:center;font-size:7px;line-height:7px;font-weight:400;color:#111;-webkit-text-stroke:0.400px;">N</div><div style="position:absolute;left:1226.5px;top:7.7px;width:8px;text-align:center;font-size:7px;line-height:7px;font-weight:400;color:#111;-webkit-text-stroke:0.400px;">E</div><div style="position:absolute;left:1226.5px;top:13.9px;width:8px;text-align:center;font-size:7px;line-height:7px;font-weight:400;color:#111;-webkit-text-stroke:0.400px;">T</div><div style="position:absolute;left:1042.5px;top:0.0px;white-space:nowrap;font-size:9.5px;line-height:13.5px;color:#1e9cff;font-weight:700;letter-spacing:0.879px;">84°</div><div style="position:absolute;left:1042.5px;top:9.2px;white-space:nowrap;font-size:9.5px;line-height:13.5px;color:#1e9cff;font-weight:700;letter-spacing:0.967px;">2234</div><div style="position:absolute;left:1127.5px;top:2.6px;white-space:nowrap;font-size:13.2px;line-height:17.2px;color:#3c3c3c;font-weight:400;letter-spacing:-0.289px;">7%</div><div style="position:absolute;left:1191.5px;top:2.6px;white-space:nowrap;font-size:13.2px;line-height:17.2px;color:#3c3c3c;font-weight:400;letter-spacing:0.360px;">66%</div><div style="position:absolute;left:1267.5px;top:0.0px;white-space:nowrap;font-size:9px;line-height:13px;color:#ff60f6;font-weight:700;letter-spacing:0.248px;">0 KB/s</div><div style="position:absolute;left:1267.5px;top:9.5px;white-space:nowrap;font-size:9px;line-height:13px;color:#3a18f0;font-weight:700;letter-spacing:0.248px;">1 KB/s</div><div style="position:absolute;left:1370.5px;top:2.7px;white-space:nowrap;font-size:13px;line-height:17px;color:#fff;font-weight:400;letter-spacing:0.000px;">A</div>
<!-- s_toolbar -->
<div style="position:absolute;left:0px;top:45.5px;width:1440px;height:64.5px;background:#c8c8c8;"></div><div style="position:absolute;left:0px;top:109px;width:1440px;height:1px;background:#a6a6a6;"></div><div style="position:absolute;left:46px;top:49px;width:26px;height:24px;background:linear-gradient(#58a6ff,#86c0ff);border-radius:2px;"></div><div style="position:absolute;left:1340px;top:49px;width:26px;height:24px;background:linear-gradient(#58a6ff,#86c0ff);border-radius:2px;"></div><div style="position:absolute;left:180px;top:81px;width:24px;height:24px;background:linear-gradient(#58a6ff,#86c0ff);border-radius:2px;"></div><div style="position:absolute;left:116.5px;top:86.5px;white-space:nowrap;font-size:11px;line-height:15px;color:#1a1a1a;font-weight:400;letter-spacing:0.286px;">Image</div><div style="position:absolute;left:433px;top:83px;width:50.5px;height:20px;background:#e2e2e2;"></div><div style="position:absolute;left:483.5px;top:83px;width:14px;height:20px;background:#b2b2b2;border-radius:0 3px 3px 0;"></div><div style="position:absolute;left:437px;top:86.5px;white-space:nowrap;font-size:11px;line-height:15px;color:#111;font-weight:400;letter-spacing:-0.113px;">7.76 mm</div><div style="position:absolute;left:520px;top:86.5px;white-space:nowrap;font-size:11px;line-height:15px;color:#1a1a1a;font-weight:400;letter-spacing:0.039px;">Shape</div><div style="position:absolute;left:558px;top:83px;width:98px;height:20px;background:#d0d0d0;border-radius:3px;"></div><div style="position:absolute;left:564px;top:86.5px;white-space:nowrap;font-size:11px;line-height:15px;color:#111;font-weight:400;letter-spacing:0.351px;">Custom</div><div style="position:absolute;left:686px;top:86.5px;white-space:nowrap;font-size:11px;line-height:15px;color:#1a1a1a;font-weight:400;letter-spacing:0.230px;">Corner</div><div style="position:absolute;left:727px;top:83px;width:49px;height:20px;background:#e2e2e2;"></div><div style="position:absolute;left:776px;top:83px;width:13px;height:20px;background:#cecece;border-radius:0 3px 3px 0;"></div><div style="position:absolute;left:731.5px;top:86.5px;white-space:nowrap;font-size:11px;line-height:15px;color:#111;font-weight:400;letter-spacing:0.138px;">0.0 mm</div><div style="position:absolute;left:942.5px;top:86.5px;white-space:nowrap;font-size:11px;line-height:15px;color:#1a1a1a;font-weight:400;letter-spacing:-0.138px;">Fill</div><div style="position:absolute;left:962px;top:81px;width:68px;height:24px;background:#cdcdcd;border-radius:4px;box-shadow:0 0.500px 1px rgba(0,0,0,0.250);"></div><div style="position:absolute;left:966px;top:84px;width:60px;height:18px;background-color:#fff;background-image:linear-gradient(45deg,#e2e2e2 25%,transparent 25%,transparent 75%,#e2e2e2 75%),linear-gradient(45deg,#e2e2e2 25%,transparent 25%,transparent 75%,#e2e2e2 75%);background-size:8px 8px;background-position:0 0,4px 4px;"></div><div style="position:absolute;left:1092px;top:81px;width:68px;height:24px;background:#cdcdcd;border-radius:4px;box-shadow:0 0.500px 1px rgba(0,0,0,0.250);"></div><div style="position:absolute;left:1096px;top:84px;width:60px;height:18px;background-color:#fff;background-image:linear-gradient(45deg,#e2e2e2 25%,transparent 25%,transparent 75%,#e2e2e2 75%),linear-gradient(45deg,#e2e2e2 25%,transparent 25%,transparent 75%,#e2e2e2 75%);background-size:8px 8px;background-position:0 0,4px 4px;"></div><div style="position:absolute;left:1053.5px;top:86.5px;white-space:nowrap;font-size:11px;line-height:15px;color:#1a1a1a;font-weight:400;letter-spacing:0.285px;">Stroke</div><div style="position:absolute;left:1171px;top:83px;width:68px;height:20px;background:#e2e2e2;"></div><div style="position:absolute;left:1239px;top:83px;width:14.5px;height:20px;background:#cecece;"></div><div style="position:absolute;left:1254.5px;top:83px;width:15.5px;height:20px;background:#cecece;border-radius:0 3px 3px 0;"></div><div style="position:absolute;left:1272px;top:83px;width:20px;height:20px;background:#cecece;border-radius:3px;"></div><div style="position:absolute;left:1176px;top:86.5px;white-space:nowrap;font-size:11px;line-height:15px;color:#111;font-weight:400;letter-spacing:0.926px;">None</div><div style="position:absolute;left:1327.5px;top:86.5px;white-space:nowrap;font-size:11px;line-height:15px;color:#1a1a1a;font-weight:400;letter-spacing:0.354px;">Content</div><div style="position:absolute;left:1374px;top:83px;width:56px;height:20px;background:#d0d0d0;border-radius:3px;overflow:hidden;"><div style="position:absolute;left:6.5px;top:3.5px;white-space:nowrap;font-size:11px;line-height:15px;color:#111;font-weight:400;letter-spacing:0.392px;">Rasterized</div></div><svg style="position:absolute;left:0px;top:0px;overflow:visible;" width="1440" height="112" viewBox="0 0 1440 112"><g transform="translate(31,61)"><rect x="-8.500" y="-8.300" width="17" height="12" rx="2" fill="none" stroke="#3a3a3a" stroke-width="1"/><path d="M-8,-7.800L8,3.200M8,-7.800L-8,3.200" stroke="#3a3a3a" stroke-width="0.900"/><path d="M-7,5.500H7M-7,7.700H7" stroke="#3a3a3a" stroke-width="0.900"/></g><g transform="translate(59,61)"><rect x="-9" y="-9" width="18" height="17.500" fill="none" stroke="#222" stroke-width="1.200"/><path d="M-9,-9.0h3v2.900h-3zM-6,-9.0h3v2.900h-3zM-3,-9.0h3v2.900h-3zM0,-9.0h3v2.900h-3zM3,-9.0h3v2.900h-3zM6,-9.0h3v2.900h-3zM-9,-6.1h3v2.900h-3zM-6,-6.1h3v2.900h-3zM-3,-6.1h3v2.900h-3zM0,-6.1h3v2.900h-3zM3,-6.1h3v2.900h-3zM-9,-3.2h3v2.900h-3zM-6,-3.2h3v2.900h-3zM-3,-3.2h3v2.900h-3zM0,-3.2h3v2.900h-3zM-9,-0.3h3v2.900h-3zM-6,-0.3h3v2.900h-3zM-3,-0.3h3v2.900h-3zM-9,2.6h3v2.900h-3zM-6,2.6h3v2.900h-3z" stroke="#1c2c44" stroke-width="0.600" stroke-opacity="0.850" fill="none"/><circle cx="7.5" cy="-7.4" r="0.450" fill="#1a2c48" fill-opacity="0.800"/><circle cx="4.5" cy="-4.5" r="0.450" fill="#1a2c48" fill-opacity="0.800"/><circle cx="7.5" cy="-4.5" r="0.450" fill="#1a2c48" fill-opacity="0.800"/><circle cx="6" cy="-6.0" r="0.450" fill="#1a2c48" fill-opacity="0.800"/><circle cx="1.5" cy="-1.6" r="0.450" fill="#1a2c48" fill-opacity="0.800"/><circle cx="4.5" cy="-1.6" r="0.450" fill="#1a2c48" fill-opacity="0.800"/><circle cx="3" cy="-3.1" r="0.450" fill="#1a2c48" fill-opacity="0.800"/><circle cx="7.5" cy="-1.6" r="0.450" fill="#1a2c48" fill-opacity="0.800"/><circle cx="6" cy="-3.1" r="0.450" fill="#1a2c48" fill-opacity="0.800"/><circle cx="-1.5" cy="1.3" r="0.450" fill="#1a2c48" fill-opacity="0.800"/><circle cx="1.5" cy="1.3" r="0.450" fill="#1a2c48" fill-opacity="0.800"/><circle cx="0" cy="-0.2" r="0.450" fill="#1a2c48" fill-opacity="0.800"/><circle cx="4.5" cy="1.3" r="0.450" fill="#1a2c48" fill-opacity="0.800"/><circle cx="3" cy="-0.2" r="0.450" fill="#1a2c48" fill-opacity="0.800"/><circle cx="7.5" cy="1.3" r="0.450" fill="#1a2c48" fill-opacity="0.800"/><circle cx="6" cy="-0.2" r="0.450" fill="#1a2c48" fill-opacity="0.800"/><circle cx="-4.5" cy="4.2" r="0.450" fill="#1a2c48" fill-opacity="0.800"/><circle cx="-1.5" cy="4.2" r="0.450" fill="#1a2c48" fill-opacity="0.800"/><circle cx="-3" cy="2.7" r="0.450" fill="#1a2c48" fill-opacity="0.800"/><circle cx="1.5" cy="4.2" r="0.450" fill="#1a2c48" fill-opacity="0.800"/><circle cx="0" cy="2.7" r="0.450" fill="#1a2c48" fill-opacity="0.800"/><circle cx="4.5" cy="4.2" r="0.450" fill="#1a2c48" fill-opacity="0.800"/><circle cx="3" cy="2.7" r="0.450" fill="#1a2c48" fill-opacity="0.800"/><circle cx="7.5" cy="4.2" r="0.450" fill="#1a2c48" fill-opacity="0.800"/><circle cx="6" cy="2.7" r="0.450" fill="#1a2c48" fill-opacity="0.800"/><circle cx="-7.5" cy="7.1" r="0.450" fill="#1a2c48" fill-opacity="0.800"/><circle cx="-4.5" cy="7.1" r="0.450" fill="#1a2c48" fill-opacity="0.800"/><circle cx="-6" cy="5.6" r="0.450" fill="#1a2c48" fill-opacity="0.800"/><circle cx="-1.5" cy="7.1" r="0.450" fill="#1a2c48" fill-opacity="0.800"/><circle cx="-3" cy="5.6" r="0.450" fill="#1a2c48" fill-opacity="0.800"/><circle cx="1.5" cy="7.1" r="0.450" fill="#1a2c48" fill-opacity="0.800"/><circle cx="0" cy="5.6" r="0.450" fill="#1a2c48" fill-opacity="0.800"/><circle cx="4.5" cy="7.1" r="0.450" fill="#1a2c48" fill-opacity="0.800"/><circle cx="3" cy="5.6" r="0.450" fill="#1a2c48" fill-opacity="0.800"/><circle cx="7.5" cy="7.1" r="0.450" fill="#1a2c48" fill-opacity="0.800"/><circle cx="6" cy="5.6" r="0.450" fill="#1a2c48" fill-opacity="0.800"/></g><g transform="translate(87,61)"><rect x="-7.800" y="-7.800" width="15.600" height="15.600" fill="none" stroke="#222" stroke-width="1.300"/><path d="M-7.800,7.800L7.800,-7.800" stroke="#222" stroke-width="1.200"/><path d="M-7.800,-5L-5,-7.800M-7.800,-1.7L-1.7,-7.800M-7.800,1.6L1.6,-7.800M-7.800,4.9L4.9,-7.800" stroke="#222" stroke-width="0.900"/></g><g transform="translate(115,61)"><circle cx="2.500" cy="0" r="6.300" fill="none" stroke="#333" stroke-width="0.800" stroke-dasharray="2,1.500"/><circle cx="-2.500" cy="-0.300" r="6.600" fill="#2e2e2e"/></g><g transform="translate(159,61)"><rect x="-8.500" y="-9" width="11.500" height="11.500" fill="#b4b4b4" stroke="#a2a2a2" stroke-width="1"/><circle cx="2.500" cy="2.500" r="6" fill="#b0b0b0" stroke="#a2a2a2" stroke-width="1"/><path d="M-3.500,2.500A6,6 0 0 1 2.500,-3.500H3V2.500Z" fill="#cfcfcf"/></g><g transform="translate(187,61)"><path d="M-8.500,-9H3V-3.300A6,6 0 1 1 -3.300,3H-8.500Z" fill="#6a6a6a" stroke="#2e2e2e" stroke-width="1.300"/></g><g transform="translate(215,61)"><rect x="-8.500" y="-9" width="11.500" height="11.500" fill="#8a8a8a" stroke="none" stroke-width="1"/><circle cx="2.500" cy="2.500" r="6" fill="#7e7e7e" stroke="none" stroke-width="1"/><path d="M-3.500,2.500A6,6 0 0 1 2.500,-3.500H3V2.500Z" fill="#b0b0b0" stroke="#2e2e2e" stroke-width="1.200"/></g><g transform="translate(243,61)"><rect x="-8.500" y="-9" width="11.500" height="11.500" fill="#b2b2b2" stroke="#a0a0a0" stroke-width="1"/><circle cx="2.500" cy="2.500" r="6" fill="#aeaeae" stroke="#a0a0a0" stroke-width="1"/><circle cx="-1" cy="-1" r="3.800" fill="#bcbcbc" stroke="#a0a0a0" stroke-width="0.900"/></g><g transform="translate(271,61)"><rect x="-8.500" y="-9" width="11.500" height="11.500" fill="#b2b2b2" stroke="#a2a2a2" stroke-width="1"/><circle cx="2.500" cy="2.500" r="6" fill="#adadad" stroke="#a2a2a2" stroke-width="1"/></g><g transform="translate(299,61)"><rect x="-8.500" y="-9" width="11.500" height="11.500" fill="#6c6c6c" stroke="#2e2e2e" stroke-width="1"/><circle cx="2.500" cy="2.500" r="6" fill="#6c6c6c" stroke="#2e2e2e" stroke-width="1"/></g><g transform="translate(343,61)"><rect x="-9" y="-7" width="10" height="11.500" rx="2.500" fill="none" stroke="#3a3a3a" stroke-width="1.200"/><rect x="-5.500" y="0" width="11.500" height="8" rx="2.500" fill="none" stroke="#3a3a3a" stroke-width="1.200"/><path d="M1,-7.500A7,6 0 0 1 8,-2.500" fill="none" stroke="#3a3a3a" stroke-width="1.200"/><path d="M5.800,-4L8.200,-1.800L10,-4.800" fill="none" stroke="#3a3a3a" stroke-width="1.200"/></g><g transform="translate(371,61)"><path d="M-1.300,-8V8H-8.800L-4.500,-8Z" fill="#4a4a4a"/><path d="M1.300,-8V8H8.800L4.500,-8Z" fill="#aaa" stroke="#888" stroke-width="0.700"/><path d="M0,-8.500V8.500" stroke="#999" stroke-width="0.700"/></g><g transform="translate(399,61)"><path d="M-7.500,-9L7.500,-5.500V-1.300H-7.500Z" fill="#4a4a4a"/><path d="M-7.500,1.300H7.500V4.800L-7.500,8.800Z" fill="#b4b4b4" stroke="#888" stroke-width="0.700"/><path d="M-8.500,0H8.500" stroke="#999" stroke-width="0.700"/></g><g transform="translate(445,61)"><path d="M-8,-5.500H8" stroke="#222" stroke-width="1.600"/><path d="M-7.500,-2.300H2M-7.500,0.700H2M-7.500,3.700H2" stroke="#444" stroke-width="1.500"/><path d="M5.200,5.500V-2.500M2.700,0L5.200,-2.800L7.700,0" stroke="#222" stroke-width="1.400" fill="none"/></g><g transform="translate(473,61)"><path d="M-8,5.500H8" stroke="#222" stroke-width="1.800"/><path d="M-7.500,-4.800H2M-7.500,-1.800H2M-7.500,1.200H2" stroke="#444" stroke-width="1.500"/><path d="M5.200,-6V2.500M2.700,0L5.200,2.800L7.700,0" stroke="#222" stroke-width="1.400" fill="none"/></g><g transform="translate(517,61)"><path d="M-5,-8V5H8M-8,-5H5V8" stroke="#9c9c9c" stroke-width="1.500" fill="none"/><path d="M-2.500,2.500L2.500,-2.500M-2.500,0V2.500H0M0,-2.500H2.500V0" stroke="#9c9c9c" stroke-width="1" fill="none"/></g><g transform="translate(545,61)"><rect x="-7.500" y="-7.500" width="15" height="15" fill="none" stroke="#9c9c9c" stroke-width="1.300"/><path d="M-8,-8h2v2h-2zM6,-8h2v2h-2zM-8,6h2v2h-2zM6,6h2v2h-2z" fill="#9c9c9c"/><path d="M-4,-3H-1V-5M4,3H1V5M-3,2C-4,0 -1,-2 0,0C1,2 4,0 3,-2" stroke="#9c9c9c" stroke-width="1" fill="none"/></g><g transform="translate(591.5,61)"><rect x="-9" y="-8.500" width="18" height="17" fill="none" stroke="#3a3a3a" stroke-width="1.100"/><circle r="3.300" fill="none" stroke="#222" stroke-width="1.700"/><path d="M3.00,0.00L6.20,0.00M2.12,2.12L4.38,4.38M0.00,3.00L0.00,6.20M-2.12,2.12L-4.38,4.38M-3.00,0.00L-6.20,0.00M-2.12,-2.12L-4.38,-4.38M-0.00,-3.00L-0.00,-6.20M2.12,-2.12L4.38,-4.38" stroke="#222" stroke-width="1.900"/></g><g transform="translate(619.5,61)"><rect x="-9" y="-8.500" width="18" height="17" fill="none" stroke="#3a3a3a" stroke-width="1.100"/><path d="M-6,-5.500H2L4,-3.500V5.500H-6Z" fill="none" stroke="#777" stroke-width="0.900"/><path d="M-4,-2H0M-4,0.500H-1M-4,3H0" stroke="#777" stroke-width="0.800"/><circle cx="2.500" cy="0.500" r="3" fill="none" stroke="#333" stroke-width="1.100"/><path d="M4.500,3L7,6" stroke="#333" stroke-width="1.600"/></g><g transform="translate(647.5,61)"><rect x="-9" y="-8.500" width="18" height="17" fill="none" stroke="#3a3a3a" stroke-width="1.100"/><rect x="-6" y="-5.500" width="12" height="11" rx="2.500" fill="#2a2a2a"/><path d="M-2.500,3.500L-1.500,-0.500H3.500L2.500,3.500ZM-1.500,-2.500H3.500" stroke="#ddd" stroke-width="1" fill="#ddd"/></g><g transform="translate(675.5,61)"><rect x="-9" y="-8.500" width="18" height="17" fill="none" stroke="#3a3a3a" stroke-width="1.100"/><path d="M-7,-5.500H7" stroke="#222" stroke-width="1.200"/><path d="M-4,-5.500V4H-0.500V-5.500ZM0.800,-5.500V1H3.500V5.500H6V-5.500Z" fill="#333"/><path d="M-6.500,-4.500V-2.500" stroke="#333" stroke-width="1"/></g><g transform="translate(703.5,61)"><rect x="-9" y="-8.500" width="18" height="17" fill="none" stroke="#3a3a3a" stroke-width="1.100"/><rect x="-4" y="-6" width="8" height="7.500" fill="#2e2e2e"/><rect x="-7" y="-2" width="7" height="6.500" fill="#aaa" stroke="#666" stroke-width="0.800"/><path d="M1,4.500a2,2 0 1 0 3,-2.500l1.500,-1.500a2,2 0 1 1 2,2.500" stroke="#444" stroke-width="1.100" fill="none"/></g><g transform="translate(731.5,61)"><rect x="-9" y="-8.500" width="18" height="17" fill="none" stroke="#3a3a3a" stroke-width="1.100"/><rect x="-5.500" y="-6" width="7.500" height="7.500" fill="#d2d2d2" stroke="#444" stroke-width="0.900"/><path d="M2.500,-2H5.500V5.500H-2V2.500" stroke="#2e2e2e" stroke-width="2" fill="none"/></g><g transform="translate(759.5,61)"><rect x="-9" y="-8.500" width="18" height="17" fill="none" stroke="#3a3a3a" stroke-width="1.100"/><path d="M0,-7V7" stroke="#444" stroke-width="1.500"/><path d="M-5.500,0L-2,-3V3ZM5.500,0L2,-3V3Z" fill="#333"/></g><g transform="translate(787.5,61)"><rect x="-9" y="-8.500" width="18" height="17" fill="none" stroke="#3a3a3a" stroke-width="1.100"/><path d="M-0.500,-6.500A6.500,6.500 0 0 0 -0.500,6.500Z" fill="#2e2e2e"/><path d="M1,-5.500L3,-4L1,-2.500L3,-1L1,0.500L3,2L1,3.500L3,5M4,-6L6,-4.500M4,-3L6,-1.500M4,0L6,1.500M4,3L6,4.500" stroke="#555" stroke-width="0.800" fill="none"/></g><g transform="translate(815.5,61)"><rect x="-9" y="-8.500" width="18" height="17" fill="none" stroke="#3a3a3a" stroke-width="1.100"/><path d="M-6,-6H-3.500V6.500H-6Z" fill="#333"/><path d="M-2.500,2L4,-5.500L6,-3.500L-0.500,3.500Z" fill="#666"/><path d="M-2.500,4.500H6.500V6.500H-2.500Z" fill="#444"/><path d="M-2.500,-5V1" stroke="#888" stroke-width="1.500"/></g><g transform="translate(843.5,61)"><rect x="-9" y="-8.500" width="18" height="17" fill="none" stroke="#3a3a3a" stroke-width="1.100"/><path d="M-5.500,-6.500H-3V6.500H-5.500Z" fill="#444"/><path d="M-3,-6L1,-5L-2.500,6.500ZM-1,-4.500L4,-2L-2,6.500ZM1,-2L6.500,0.500L-2,6.500Z" fill="#aaa" stroke="#555" stroke-width="0.700"/></g><g transform="translate(888.5,61)"><rect x="-9" y="-8.500" width="18" height="17" fill="none" stroke="#3a3a3a" stroke-width="1.100"/></g><g transform="translate(916.5,61)"><rect x="-9" y="-8.500" width="18" height="17" fill="none" stroke="#3a3a3a" stroke-width="1.100"/><rect x="-6.500" y="-5.500" width="13" height="11" rx="1.500" fill="#2a2a2a"/><path d="M-4.500,-3.500H-1.500V-0.500H-4.500ZM-4.500,1H-1.500V4H-4.500Z" fill="#ddd"/><path d="M0,-3H4.500M0,-1H3.500M0,1.500H4.500M0,3.500H3.500" stroke="#ddd" stroke-width="0.900"/></g><g transform="translate(944.5,61)"><rect x="-9" y="-8.500" width="18" height="17" fill="none" stroke="#3a3a3a" stroke-width="1.100"/><path d="M-3.500,5.500C-3.500,-2 -2.500,-6 -0.500,-6M-0.500,5.500C-0.500,-2 0.500,-6 2.500,-6M2.500,5.500C2.500,-2 3.500,-6 5.500,-6" stroke="#444" stroke-width="0.900" fill="none"/><path d="M-6.500,-2.500C-3,-3.500 3,-1.500 6.500,-2.500M-6.500,2.500C-3,1.500 3,3.500 6.500,2.500" stroke="#444" stroke-width="0.800" fill="none"/></g><g transform="translate(972.5,61)"><rect x="-9" y="-8.500" width="18" height="17" fill="none" stroke="#3a3a3a" stroke-width="1.100"/><rect x="-6" y="-6" width="12" height="12" rx="3.500" fill="none" stroke="#2a2a2a" stroke-width="1.600"/><path d="M0,-3.200V3.200M-2.800,-1.600L2.800,1.600M2.800,-1.600L-2.800,1.600" stroke="#2a2a2a" stroke-width="1.300"/></g><g transform="translate(1000.5,61)"><rect x="-9" y="-8.500" width="18" height="17" fill="none" stroke="#3a3a3a" stroke-width="1.100"/><rect x="-3" y="-6" width="6.500" height="6" fill="#333"/><path d="M-2,-1L-0.500,-3L0.500,-2L1.500,-3.500L3,-1Z" fill="#ddd"/><path d="M-6.500,-5H-4M-6.500,-3H-4M-6.500,-1H-4M4.500,-5H6.500M4.500,-3H6.500M4.500,-1H6.500M-6.500,1.500H6.500M-6.500,3.500H6.500M-6.500,5.500H6.500" stroke="#777" stroke-width="0.900"/></g><g transform="translate(1028.5,61)"><rect x="-9" y="-8.500" width="18" height="17" fill="none" stroke="#3a3a3a" stroke-width="1.100"/><rect x="-6.500" y="-6" width="13" height="12" fill="#2a2a2a"/><path d="M-3,-3.500H3M0,-3.500V3.500M-3,3.500H3" stroke="#ddd" stroke-width="1.100"/></g><g transform="translate(1056,61)"><path d="M-6.500,-7H6.500V8H-6.500Z" fill="#8f8f8f"/><path d="M-4,-9V-6M4,-9V-6" stroke="#8f8f8f" stroke-width="1.800"/><path d="M-4,-2.500H4M-4,0.500H4M-4,3.500H2" stroke="#c4c4c4" stroke-width="1.500"/></g><g transform="translate(1084,61)"><rect x="-4" y="-8.500" width="9" height="8.500" fill="#2e2e2e"/><path d="M-3,-1.500L-1,-4.500L0.500,-3L2,-5.500L4,-1.500Z" fill="#e0e0e0"/><circle cx="2.800" cy="-6.500" r="0.900" fill="#e0e0e0"/><path d="M-9,-8H-5.500M-9,-6H-5.500M-9,-4H-5.500M-9,-2H-5.500M6.500,-8H9M6.500,-6H9M6.500,-4H9M6.500,-2H9M-9,1.500H9M-9,3.500H9M-9,5.500H9M-9,7.500H9" stroke="#666" stroke-width="0.900"/></g><g transform="translate(1112,61)"><path d="M-5,8.500L0,-5.500L5,8.500M-3.200,3.500H3.200" stroke="#333" stroke-width="1.200" fill="none"/><path d="M3.800,-8.500L5.300,-7L3.800,-5.500L2.300,-7Z" fill="none" stroke="#333" stroke-width="0.800"/></g><g transform="translate(1353,61)"><circle r="8.500" fill="none" stroke="#2a2a2a" stroke-width="1"/><circle cx="-1.500" cy="-1.500" r="1.700" fill="#222"/><path d="M4.500,-4.500V3.500H-4.500" stroke="#446" stroke-width="0.900" fill="none" stroke-dasharray="3,1"/></g><g transform="translate(1381,61)"><rect x="-7.500" y="-7.500" width="15" height="15" fill="none" stroke="#2a2a2a" stroke-width="1.100" stroke-dasharray="2.500,1.500"/><path d="M0,-4.500V4.500M-3,-3L3,3M3,-3L-3,3M-3.500,0H3.500" stroke="#333" stroke-width="1"/><path d="M-6.500,-1.500L-4.500,0L-6.500,1.500ZM6.500,-1.500L4.500,0L6.500,1.500Z" fill="#333"/></g><g transform="translate(1409,61)"><rect x="-8.500" y="-8.500" width="17" height="17" fill="none" stroke="#2a2a2a" stroke-width="1.200"/><circle cx="-2" cy="-1.500" r="2" fill="#222"/><path d="M5,-5V5H-5.500" stroke="#333" stroke-width="1" fill="none"/></g><g transform="translate(1140,61)"><path d="M-3,-7.300H8.300" stroke="#2e2e2e" stroke-width="2.600"/><path d="M0.800,-7V8.500M5.300,-7V8.500" stroke="#2e2e2e" stroke-width="2.300" fill="none"/><path d="M0.500,-8.600A5.600,5.300 0 0 0 0.500,2Z" fill="#2e2e2e" stroke="#2e2e2e" stroke-width="1.800"/></g><g transform="translate(1196,61)"><path d="M-7,-8.500H1M-4.500,-8.500V2M-1.500,-8.500V2" stroke="#2e2e2e" stroke-width="1.500" fill="none"/><path d="M-4.500,-8.500A3,3 0 0 0 -4.500,-2.500Z" fill="#2e2e2e" stroke="#2e2e2e" stroke-width="1.200"/><circle cx="4.500" cy="5" r="4" fill="none" stroke="#2e2e2e" stroke-width="1"/><path d="M3,3.500L6,6.500M6,3.500L3,6.500" stroke="#2e2e2e" stroke-width="1"/></g><g transform="translate(1168,61)"><circle cx="6" cy="-5.500" r="4" fill="none" stroke="#2e2e2e" stroke-width="1"/><path d="M4.500,-7L7.500,-4M7.500,-7L4.500,-4" stroke="#2e2e2e" stroke-width="1"/></g><g transform="translate(1225,61)"><path d="M-7.500,-7.500V7.500M-9,-5.500L-7.500,-8L-6,-5.500M-9,5.500L-7.500,8L-6,5.500" stroke="#a2a2a2" stroke-width="0.900" fill="none"/></g><g transform="translate(1280,61)"><path d="M-5,-9H3L8,-4.500V9H-5V4H-8.500V-3H-5Z" fill="#8e8e8e"/><path d="M3,-9V-4.500H8" fill="#a6a6a6"/></g><g transform="translate(1308,61)"><rect x="-8" y="-7" width="16" height="14.500" rx="2.500" fill="none" stroke="#555" stroke-width="1"/><path d="M-6,2.500H6M-6,5H6" stroke="#555" stroke-width="0.900"/></g><path transform="translate(188.3,85.5) scale(1.06)" d="M0,0L0,12.500L3,9.800L5.200,14.500L7.400,13.500L5.200,8.900L9.200,8.900Z" fill="#333"/><g transform="translate(226,93)"><rect x="-8" y="-9" width="12" height="11.500" rx="2" fill="none" stroke="#555" stroke-width="1"/></g><path transform="translate(227,90.5) scale(0.78)" d="M0,0L0,12.500L3,9.800L5.200,14.500L7.400,13.500L5.200,8.900L9.200,8.900Z" fill="#333"/><g transform="translate(259,93)"><rect x="-7.500" y="-9" width="9" height="8" fill="#8a8a8a"/><circle cx="0.500" cy="0" r="5.500" fill="#9a9a9a" stroke="#555" stroke-width="1.200"/><path d="M-5,0A5.500,5.500 0 0 1 0.500,-5.500V0Z" fill="#c8c8c8"/></g><path transform="translate(261,92.5) scale(0.7)" d="M0,0L0,12.500L3,9.800L5.200,14.500L7.400,13.500L5.200,8.900L9.200,8.900Z" fill="#333"/><g transform="translate(293,93)"><rect x="-7.500" y="-8.500" width="14" height="13.500" rx="1" fill="none" stroke="#444" stroke-width="1.100"/><path d="M-7.500,-6H6.500" stroke="#444" stroke-width="0.900"/><path d="M-6,3L-2.500,-1.500L0,1L2,-1L5,3Z" fill="none" stroke="#555" stroke-width="0.900"/><path d="M-7,6H5" stroke="#444" stroke-width="1"/></g><path transform="translate(295.5,92) scale(0.7)" d="M0,0L0,12.500L3,9.800L5.200,14.500L7.400,13.500L5.200,8.900L9.200,8.900Z" fill="#333"/><g transform="translate(343,93)"><rect x="-6.500" y="-6.500" width="13" height="13" fill="none" stroke="#666" stroke-width="1"/><path d="M0,-9V9M-9,0H9" stroke="#666" stroke-width="0.900"/><circle r="2.300" fill="#aaa" stroke="#555" stroke-width="0.900"/></g><g transform="translate(377,93)"><rect x="-8.500" y="3" width="17" height="5.500" rx="1" fill="none" stroke="#666" stroke-width="1"/><path d="M0,3V-3" stroke="#666" stroke-width="1"/><circle cx="0" cy="-4" r="1.300" fill="none" stroke="#555" stroke-width="0.900"/><path d="M-4,-6A4.500,4.500 0 0 1 4,-6" stroke="#555" stroke-width="0.900" fill="none"/></g><g transform="translate(417.5,93.5)"><rect x="-2.500" y="-2.500" width="5" height="5" fill="none" stroke="#444" stroke-width="1"/><path d="M0,-6.500L-2,-4.200H2ZM0,6.500L-2,4.200H2ZM-6.500,0L-4.200,-2V2ZM6.500,0L4.200,-2V2Z" fill="#333"/></g><path d="M161.500,86V100M401.500,86V100M903.500,87V99M1305.500,86V100" stroke="#999" stroke-width="1"/><path d="M801,85H807A10,10 0 0 1 817,95V100" fill="none" stroke="#444" stroke-width="1.300"/><path d="M813.500,102.500H819.500V96.500Z" fill="#444"/><path d="M838,86C846,88 851,93 853,101M839,92C844,93 847,96 848,101.500" fill="none" stroke="#444" stroke-width="1"/><circle cx="843" cy="87.500" r="1.200" fill="#c8c8c8" stroke="#444" stroke-width="0.700"/><circle cx="852" cy="96" r="1.200" fill="#c8c8c8" stroke="#444" stroke-width="0.700"/><circle cx="841" cy="92.500" r="1.200" fill="#c8c8c8" stroke="#444" stroke-width="0.700"/><circle cx="846.500" cy="97.500" r="1.200" fill="#c8c8c8" stroke="#444" stroke-width="0.700"/><circle cx="872" cy="93" r="1.800" fill="#333"/><circle cx="877.800" cy="93" r="1.800" fill="#333"/><circle cx="883.700" cy="93" r="1.800" fill="#333"/><path d="M490.500,85.500L493.500,90.500H487.500ZM490.500,100.500L493.500,95.500H487.500Z" fill="#1e1e1e"/><path d="M639.500,91L645,96.500L650.500,91" fill="none" stroke="#222" stroke-width="1.300"/><path d="M779,91L782.500,87.500L786,91M779,95.500L782.500,99L786,95.500" fill="none" stroke="#222" stroke-width="1.100"/><path d="M1027.5,98V103.5H1022Z" fill="#333"/><path d="M1157.5,98V103.5H1152Z" fill="#333"/><path d="M1242.500,91L1246,87.500L1249.500,91M1242.500,95.500L1246,99L1249.500,95.500" fill="none" stroke="#222" stroke-width="1.100"/><path d="M1258,91H1266.500L1262.200,96Z" fill="#333"/><path d="M1274.500,87.500H1290M1274.500,93H1290M1274.500,98.500H1290" stroke="#333" stroke-width="1"/><circle cx="1279" cy="87.500" r="1.800" fill="#cecece" stroke="#333" stroke-width="0.900"/><circle cx="1285.500" cy="93" r="1.800" fill="#cecece" stroke="#333" stroke-width="0.900"/><circle cx="1279.500" cy="98.500" r="1.800" fill="#cecece" stroke="#333" stroke-width="0.900"/></svg><div style="position:absolute;left:881.5px;top:52.0px;white-space:nowrap;font-size:13px;line-height:17px;color:#222;font-weight:400;letter-spacing:0.000px;font-family:'Liberation Serif',serif;-webkit-text-stroke:0.350px;">Ty</div><div style="position:absolute;left:1158.5px;top:51.8px;white-space:nowrap;font-size:18.5px;line-height:22.5px;color:#2a2a2a;font-weight:700;letter-spacing:0.000px;font-family:'Liberation Serif',serif;-webkit-text-stroke:0;">A</div><div style="position:absolute;left:1221px;top:50.0px;white-space:nowrap;font-size:19px;line-height:23px;color:#9e9e9e;font-weight:400;letter-spacing:0.000px;font-family:'Liberation Serif',serif;-webkit-text-stroke:0;">T</div><div style="position:absolute;left:1243.5px;top:47.5px;white-space:nowrap;font-size:23px;line-height:27px;color:#8f8f8f;font-weight:700;letter-spacing:0.000px;font-family:'Liberation Serif',serif;">A</div><div style="position:absolute;left:1301px;top:53.500px;font-size:7.500px;line-height:8px;font-weight:400;color:#333;-webkit-text-stroke:0.250px;white-space:nowrap;letter-spacing:0.200px;font-family:'Liberation Sans','Noto Sans CJK JP',sans-serif;">ルビ</div>
<!-- s_left -->
<div style="position:absolute;left:0px;top:110px;width:24px;height:790px;background:#c6c6c6;"></div><div style="position:absolute;left:24px;top:110px;width:1px;height:790px;background:#a8a8a8;"></div><div style="position:absolute;left:25px;top:110px;width:65px;height:566px;background:#c4c4c4;"></div><div style="position:absolute;left:24px;top:676px;width:66px;height:224px;background:#989898;"></div><div style="position:absolute;left:90px;top:110px;width:1px;height:790px;background:#a2a2a2;"></div><div style="position:absolute;left:1px;top:154px;width:22px;height:20px;background:#fff;"></div><div style="position:absolute;left:1px;top:174px;width:22px;height:20px;background:#fdc7ad;"></div><div style="position:absolute;left:1px;top:194px;width:22px;height:20px;background:#f9bcb3;"></div><div style="position:absolute;left:1px;top:214px;width:22px;height:20px;background:#f3aeca;"></div><div style="position:absolute;left:1px;top:234px;width:22px;height:20px;background:#fc9198;"></div><div style="position:absolute;left:1px;top:254px;width:22px;height:20px;background:#fdab97;"></div><div style="position:absolute;left:1px;top:274px;width:22px;height:20px;background:#fd9f7b;"></div><div style="position:absolute;left:1px;top:294px;width:22px;height:20px;background:#fdb47a;"></div><div style="position:absolute;left:1px;top:314px;width:22px;height:20px;background:#fdc67d;"></div><div style="position:absolute;left:1px;top:334px;width:22px;height:20px;background:#f2dc79;"></div><div style="position:absolute;left:1px;top:354px;width:22px;height:20px;background:#c6e36d;"></div><div style="position:absolute;left:1px;top:374px;width:22px;height:20px;background:#afe272;"></div><div style="position:absolute;left:1px;top:394px;width:22px;height:20px;background:#a3e07b;"></div><div style="position:absolute;left:1px;top:414px;width:22px;height:20px;background:#8fdd8c;"></div><div style="position:absolute;left:1px;top:434px;width:22px;height:20px;background:#74d991;"></div><div style="position:absolute;left:1px;top:454px;width:22px;height:20px;background:#04dcae;"></div><div style="position:absolute;left:1px;top:474px;width:22px;height:20px;background:#2ed9c5;"></div><div style="position:absolute;left:1px;top:494px;width:22px;height:20px;background:#5fd9d1;"></div><div style="position:absolute;left:1px;top:514px;width:22px;height:20px;background:#30d2d1;"></div><div style="position:absolute;left:1px;top:534px;width:22px;height:20px;background:#63c9d1;"></div><div style="position:absolute;left:1px;top:554px;width:22px;height:20px;background:#71c9d9;"></div><div style="position:absolute;left:1px;top:574px;width:22px;height:20px;background:#a4c9e1;"></div><div style="position:absolute;left:1px;top:594px;width:22px;height:20px;background:#bcc8e1;"></div><div style="position:absolute;left:1px;top:614px;width:22px;height:20px;background:#e1a9c9;"></div><div style="position:absolute;left:1px;top:634px;width:22px;height:20px;background:#f59dc5;"></div><div style="position:absolute;left:1px;top:654px;width:22px;height:20px;background:#fc75a5;"></div><div style="position:absolute;left:1px;top:674px;width:22px;height:20px;background:#fc81a5;"></div><div style="position:absolute;left:1px;top:694px;width:22px;height:20px;background:#fc5199;"></div><div style="position:absolute;left:1px;top:714px;width:22px;height:20px;background:#fc5d89;"></div><div style="position:absolute;left:1px;top:734px;width:22px;height:20px;background:#fc6989;"></div><div style="position:absolute;left:1px;top:754px;width:22px;height:20px;background:#fc8971;"></div><div style="position:absolute;left:1px;top:774px;width:22px;height:20px;background:#fca569;"></div><div style="position:absolute;left:1px;top:794px;width:22px;height:20px;background:#fcc569;"></div><div style="position:absolute;left:1px;top:814px;width:22px;height:20px;background:#f8e139;"></div><div style="position:absolute;left:1px;top:834px;width:22px;height:20px;background:#d4e539;"></div><div style="position:absolute;left:1px;top:854px;width:22px;height:20px;background:#a9e161;"></div><div style="position:absolute;left:1px;top:874px;width:22px;height:4px;background:#62e162;"></div><div style="position:absolute;left:29px;top:135px;width:28px;height:28px;background:linear-gradient(#5aa8ff,#84beff);border-radius:2px;"></div><div style="position:absolute;left:57px;top:201px;width:28px;height:28px;background:#8a8a8a;border-radius:2px;"></div><div style="position:absolute;left:35px;top:343.5px;white-space:nowrap;font-size:25px;line-height:29px;color:#3a3a3a;font-weight:700;letter-spacing:0.000px;font-family:'Liberation Serif',serif;">T</div><div style="position:absolute;left:33.5px;top:502px;width:19px;height:20px;background:linear-gradient(75deg,#565656,#bebebe);"></div><svg style="position:absolute;left:0px;top:0px;overflow:visible;" width="120" height="900" viewBox="0 0 120 900"><path d="M1.500,173.500L22.500,154.500" stroke="#f11" stroke-width="1.100"/><rect x="5" y="119.5" width="2.200" height="2.200" fill="#444"/><rect x="8.8" y="119.5" width="2.200" height="2.200" fill="#444"/><rect x="12.6" y="119.5" width="2.200" height="2.200" fill="#444"/><rect x="16.4" y="119.5" width="2.200" height="2.200" fill="#444"/><rect x="5" y="123.5" width="2.200" height="2.200" fill="#444"/><rect x="8.8" y="123.5" width="2.200" height="2.200" fill="#444"/><rect x="12.6" y="123.5" width="2.200" height="2.200" fill="#444"/><rect x="16.4" y="123.5" width="2.200" height="2.200" fill="#444"/><circle cx="6.500" cy="137.5" r="2.100" fill="none" stroke="#333" stroke-width="1.500"/><path d="M11,135.7H20M11,139.3H20" stroke="#333" stroke-width="1.500"/><circle cx="6.500" cy="147.5" r="2.100" fill="none" stroke="#333" stroke-width="1.500"/><path d="M11,145.7H20M11,149.3H20" stroke="#333" stroke-width="1.500"/><path d="M33,118L39.500,124.500M39.500,118L33,124.500" stroke="#333" stroke-width="1.200"/><path d="M31,236.5H83" stroke="#9c9c9c" stroke-width="1"/><path d="M31,413H83" stroke="#9c9c9c" stroke-width="1"/><path d="M31,489.5H83" stroke="#9c9c9c" stroke-width="1"/><path d="M31,599.5H83" stroke="#9c9c9c" stroke-width="1"/><path transform="translate(38.2,140) scale(1.22)" d="M0,0L0,12.500L3,9.800L5.200,14.500L7.400,13.500L5.200,8.900L9.200,8.900Z" fill="#333"/><g transform="translate(71,149)"><path d="M-7.500,8C-7,0 -2,-6 8,-7.500" fill="none" stroke="#3a3a3a" stroke-width="1.200"/><rect x="-5" y="-5" width="3.500" height="3.500" fill="#3a3a3a"/><circle cx="-7.500" cy="8" r="1.200" fill="#3a3a3a"/><circle cx="8" cy="-7.500" r="1.200" fill="#3a3a3a"/><path d="M-1.500,-1L7,0L3.500,7Z" fill="#3a3a3a"/></g><g transform="translate(43,182)"><path d="M-8.500,4A13,13 0 0 1 4,-8.500V4Z" fill="#aaa"/><path d="M-8.500,4A13,13 0 0 1 4,-8.500" fill="none" stroke="#555" stroke-width="1.300"/></g><path transform="translate(42.5,178.5) scale(0.85)" d="M0,0L0,12.500L3,9.800L5.200,14.500L7.400,13.500L5.200,8.900L9.200,8.900Z" fill="#333"/><g transform="translate(71,182)"><path d="M-5,-9L2.500,3.500M5,-9L-2.500,3.500" stroke="#3a3a3a" stroke-width="2.600" stroke-linecap="round"/><circle cx="-4" cy="6" r="2.300" fill="none" stroke="#3a3a3a" stroke-width="1.400"/><circle cx="4" cy="6" r="2.300" fill="none" stroke="#3a3a3a" stroke-width="1.400"/></g><path d="M82.5,193.5V187.8L76.8,193.5Z" fill="#333"/><g transform="translate(43,215)"><path d="M-7,-4.500L-1.500,3.500A3.800,3.800 0 0 0 5,-0.500L0,-8" fill="none" stroke="#3a3a3a" stroke-width="3.200"/><path d="M-9.500,-6.500l2,1M-7,-9.500l1,2M-2.500,-10l0.500,2M-0.500,-12l1.500,2" stroke="#3a3a3a" stroke-width="0.900"/></g><path d="M54.5,226.5V220.8L48.8,226.5Z" fill="#333"/><g transform="translate(71,215)"><rect x="-9" y="-8" width="18" height="15.500" fill="none" stroke="#2e2e2e" stroke-width="1.500" stroke-dasharray="4,2"/></g><path d="M82.5,226.5V220.8L76.8,226.5Z" fill="#333"/><g transform="translate(43,259)"><path d="M-5.300,-6.600C-3.500,-3 -4.500,1 -3.800,3.900C-1.500,6 1,7 3.200,8.200M-9.600,-3.800C-6,0 -3,5 0.500,9" fill="none" stroke="#4a4a4a" stroke-width="0.800"/><path d="M-3.800,3.900L-0.900,-3.800L2.800,-6.200L7.100,-3.100L5.500,0.400Z" fill="#3a3a3a"/><path d="M3.600,-7.300L5.900,-9.800L9.800,-6.200L7.700,-3.600Z" fill="#3a3a3a"/><circle cx="1.500" cy="-1.300" r="1" fill="#c4c4c4"/><path d="M-3.500,3.600L1,-0.800" stroke="#c4c4c4" stroke-width="0.600"/></g><g transform="translate(71,259)"><path d="M-7,7L7,-7" stroke="#3a3a3a" stroke-width="0.900"/><circle cx="-7.500" cy="7.500" r="1.200" fill="#c4c4c4" stroke="#3a3a3a" stroke-width="0.800"/><circle cx="7.500" cy="-7.500" r="1.200" fill="#c4c4c4" stroke="#3a3a3a" stroke-width="0.800"/></g><g transform="translate(43,292)"><path d="M-5.500,6.500L-4,2L6,-9L9.500,-6L-1,5Z" fill="#3a3a3a"/><path d="M-7,-9C-4,-4 -10,0 -8.500,4C-7.500,6.500 -5,7 -4,7" fill="none" stroke="#3a3a3a" stroke-width="0.900"/></g><g transform="translate(71,292)"><path d="M-9,8.500C-7,5 -5,2.500 -2.500,1.500L0.500,4C-2,7 -5,8 -9,8.500Z" fill="#3a3a3a"/><path d="M-1.500,0.500L8.500,-9L10,-7.500L1.500,3Z" fill="#3a3a3a"/></g><g transform="translate(43,326.3)"><rect x="-8.500" y="-9" width="16.500" height="14.500" rx="2.500" fill="#8a8a8a" stroke="#555" stroke-width="1.300"/></g><path d="M54.5,337V331.3L48.8,337Z" fill="#333"/><g transform="translate(71,326)"><path d="M-7.500,7.500C-9.500,3 -7,0 -4.500,-1.500C-6,-5 -3,-7.500 -1,-8L-2,-3C1,-2 -1,3 -3,5Z" fill="#777"/><path d="M-5,7.500L-3.500,3L6.500,-8.500L10,-5.500L-0.500,5.500Z" fill="#3a3a3a"/></g><path d="M54.5,371V365.3L48.8,371Z" fill="#333"/><g transform="translate(71,359)"><circle cx="-3" cy="-2.500" r="6.800" fill="#8e8e8e" stroke="#666" stroke-width="0.900"/><rect x="-3.500" y="-0.500" width="9.500" height="9" fill="#8e8e8e" stroke="#666" stroke-width="0.900"/><path d="M-3,-2.500L1.500,-8M-3,-2.500V4" stroke="#666" stroke-width="0.800"/></g><path transform-origin="0 0"  transform="translate(69,356.5) scale(0.85)" d="M0,0L0,12.500L3,9.800L5.200,14.500L7.400,13.500L5.200,8.900L9.200,8.900Z" fill="#333"/><path d="M82.5,371V365.3L76.8,371Z" fill="#333"/><g transform="translate(43,392)"><path d="M-9,8C-8,1 -3,-5 8,-9.500C9.500,-3 5,3 -4,8.500C-6,9.500 -8,9 -9,8Z" fill="#777" stroke="#444" stroke-width="0.900"/><path d="M-5,-6L5,6" stroke="#333" stroke-width="0.800"/><rect x="-6.200" y="-7.200" width="2.400" height="2.400" fill="#c4c4c4" stroke="#333" stroke-width="0.700"/><rect x="3.800" y="4.800" width="2.400" height="2.400" fill="#c4c4c4" stroke="#333" stroke-width="0.700"/><circle cx="0" cy="0" r="1.200" fill="#c4c4c4" stroke="#333" stroke-width="0.700"/></g><path d="M54.5,404.5V398.8L48.8,404.5Z" fill="#333"/><g transform="translate(43,435)"><ellipse cx="-2" cy="1.500" rx="6" ry="7" fill="none" stroke="#555" stroke-width="0.900"/><circle cx="-1" cy="3" r="5.500" fill="none" stroke="#444" stroke-width="0.900" stroke-dasharray="1.500,1"/><path d="M-2,3L5.500,-8.500" stroke="#222" stroke-width="1.800"/><path d="M-8,1.500L4,1.500M-2,-5.500L-1,9" stroke="#666" stroke-width="0.600"/></g><path d="M54.5,446.5V440.8L48.8,446.5Z" fill="#333"/><g transform="translate(71,435)"><path d="M-8.500,-6.500C-3,-8 3,-8 8,-9V6C3,7 -3,6 -8.500,7.500Z" fill="#7a7a7a" stroke="#555" stroke-width="0.900"/><path d="M-4,4L5,-6" stroke="#333" stroke-width="0.900"/></g><path d="M82.5,446.5V440.8L76.8,446.5Z" fill="#333"/><g transform="translate(43,468)"><path d="M-8,-6.500L-5,-7.500L-3,-6.500L0,-8L2,-6.500L5,-7.500L7.500,-6L6.500,-2L8,1L6.500,4L7.500,6.500L4,6L1,7.500L-2,6L-5,7.500L-8.500,6L-7.500,2L-9,-1L-7.500,-3.500Z" fill="#707070" stroke="#444" stroke-width="0.900"/></g><path d="M54.5,479.5V473.8L48.8,479.5Z" fill="#333"/><g transform="translate(71,468)"><path d="M-10,-3.500C-4,-7 4,-7 10,-3.500L5.500,5.500C2,4 -2,4 -5.500,5.500Z" fill="none" stroke="#555" stroke-width="0.800"/><path d="M-4.2,5.500L-8.7,-4.500M-2.8,5.500L-5.8,-4.500M-1.4,5.500L-2.9,-4.500M0.0,5.500L0.0,-4.500M1.4,5.500L2.9,-4.500M2.8,5.500L5.8,-4.500M4.2,5.500L8.7,-4.500" stroke="#555" stroke-width="0.600"/><path d="M-8.500,-0.500C-3,-3.500 3,-3.500 8.500,-0.500M-7,2.500C-2.500,0 2.500,0 7,2.500" fill="none" stroke="#555" stroke-width="0.600"/><path d="M0,-6V5" stroke="#222" stroke-width="1.500"/></g><path d="M82.5,479.5V473.8L76.8,479.5Z" fill="#333"/><path d="M54.5,523.5V517.8L48.8,523.5Z" fill="#333"/><g transform="translate(71,512)"><rect x="-9" y="-8" width="18" height="16" rx="1.500" fill="#9a9a9a" stroke="#333" stroke-width="1.100"/><path d="M-9,-3C-3,-4 3,0 9,-2M-9,3C-3,1 3,5 9,3M-4,-8C-3,-3 -5,3 -3,8M3,-8C5,-3 2,3 4,8" fill="none" stroke="#333" stroke-width="0.800"/></g><path d="M82.5,523.5V517.8L76.8,523.5Z" fill="#333"/><g transform="translate(43,545)"><rect x="-9.500" y="-9" width="19" height="19" fill="#444"/><path d="M-9.500,-9.0H9.500" stroke="#c4c4c4" stroke-width="0.800"/><path d="M-9.5,-9.0v3.200" stroke="#c4c4c4" stroke-width="0.800"/><path d="M-3.2,-9.0v3.200" stroke="#c4c4c4" stroke-width="0.800"/><path d="M3.1,-9.0v3.200" stroke="#c4c4c4" stroke-width="0.800"/><path d="M9.4,-9.0v3.200" stroke="#c4c4c4" stroke-width="0.800"/><path d="M-9.500,-5.8H9.500" stroke="#c4c4c4" stroke-width="0.800"/><path d="M-6.4,-5.8v3.200" stroke="#c4c4c4" stroke-width="0.800"/><path d="M-0.1,-5.8v3.200" stroke="#c4c4c4" stroke-width="0.800"/><path d="M6.2,-5.8v3.200" stroke="#c4c4c4" stroke-width="0.800"/><path d="M12.5,-5.8v3.200" stroke="#c4c4c4" stroke-width="0.800"/><path d="M-9.500,-2.6H9.500" stroke="#c4c4c4" stroke-width="0.800"/><path d="M-9.5,-2.6v3.200" stroke="#c4c4c4" stroke-width="0.800"/><path d="M-3.2,-2.6v3.200" stroke="#c4c4c4" stroke-width="0.800"/><path d="M3.1,-2.6v3.200" stroke="#c4c4c4" stroke-width="0.800"/><path d="M9.4,-2.6v3.200" stroke="#c4c4c4" stroke-width="0.800"/><path d="M-9.500,0.6H9.500" stroke="#c4c4c4" stroke-width="0.800"/><path d="M-6.4,0.6v3.200" stroke="#c4c4c4" stroke-width="0.800"/><path d="M-0.1,0.6v3.200" stroke="#c4c4c4" stroke-width="0.800"/><path d="M6.2,0.6v3.200" stroke="#c4c4c4" stroke-width="0.800"/><path d="M12.5,0.6v3.200" stroke="#c4c4c4" stroke-width="0.800"/><path d="M-9.500,3.8H9.500" stroke="#c4c4c4" stroke-width="0.800"/><path d="M-9.5,3.8v3.200" stroke="#c4c4c4" stroke-width="0.800"/><path d="M-3.2,3.8v3.200" stroke="#c4c4c4" stroke-width="0.800"/><path d="M3.1,3.8v3.200" stroke="#c4c4c4" stroke-width="0.800"/><path d="M9.4,3.8v3.200" stroke="#c4c4c4" stroke-width="0.800"/><path d="M-9.500,7.0H9.500" stroke="#c4c4c4" stroke-width="0.800"/><path d="M-6.4,7.0v3.200" stroke="#c4c4c4" stroke-width="0.800"/><path d="M-0.1,7.0v3.200" stroke="#c4c4c4" stroke-width="0.800"/><path d="M6.2,7.0v3.200" stroke="#c4c4c4" stroke-width="0.800"/><path d="M12.5,7.0v3.200" stroke="#c4c4c4" stroke-width="0.800"/></g><path d="M54.5,557V551.3L48.8,557Z" fill="#333"/><g transform="translate(71,545)"><rect x="-9.500" y="-9.500" width="19" height="19" rx="4" fill="#7c7c7c" stroke="#666" stroke-width="1"/><rect x="-6.500" y="-6.500" width="13" height="13" rx="2.500" fill="#6a6a6a"/><rect x="-3.500" y="-3" width="7" height="6" fill="#444"/></g><g transform="translate(43,578)"><rect x="-9" y="-9.500" width="12.500" height="12.500" fill="#888" stroke="#444" stroke-width="1"/><circle cx="-1.500" cy="0" r="5.500" fill="#888" stroke="#444" stroke-width="1"/><circle cx="3" cy="4" r="6" fill="#888" stroke="#444" stroke-width="1"/></g><path d="M54.5,590.5V584.8L48.8,590.5Z" fill="#333"/><g transform="translate(71,578)"><circle cx="-3.500" cy="-5" r="3.800" fill="#333"/><path d="M-5.500,-2H-1.500L-0.500,3H-6.500Z" fill="#333"/><rect x="-8.500" y="2.500" width="10" height="4" rx="1" fill="#333"/><path d="M-8,8.500H1" stroke="#333" stroke-width="1.300"/><path d="M5,-9V-3M2,-6H8M3,-8L7,-4M7,-8L3,-4" stroke="#555" stroke-width="0.700"/><circle cx="5" cy="-6" r="3.300" fill="none" stroke="#555" stroke-width="0.500" stroke-dasharray="1,1"/></g><path d="M82.5,590.5V584.8L76.8,590.5Z" fill="#333"/><g transform="translate(43,623)"><circle cx="-1.500" cy="2" r="7" fill="none" stroke="#777" stroke-width="2.600" stroke-dasharray="2.500,1.200"/><path d="M-4.500,5L3,-3.500L5,-1.500L-3,6.500Z" fill="#333"/><path d="M2.500,-5.500L6.500,-1.500" stroke="#222" stroke-width="1.800"/><path d="M4.500,-4.500L7.500,-8.500" stroke="#222" stroke-width="3" stroke-linecap="round"/></g><path d="M54.5,634.5V628.8L48.8,634.5Z" fill="#333"/><g transform="translate(71,623)"><path d="M-6.500,-6H3L8.500,-0.500V9.500H-6.500Z" fill="#808080" stroke="#444" stroke-width="1"/><path d="M3,-6V-0.500H8.500" fill="none" stroke="#444" stroke-width="0.900"/><path d="M-10,-7H-5M-7.500,-9.500V-4.500" stroke="#444" stroke-width="0.800"/></g><path d="M82.5,634.5V628.8L76.8,634.5Z" fill="#333"/><g transform="translate(43,656)"><circle cx="-2.500" cy="-3" r="6.300" fill="#a8a8a8" stroke="#555" stroke-width="1.200"/><path d="M2,1.500L8,7.500" stroke="#333" stroke-width="2"/></g><path d="M54.5,667.5V661.8L48.8,667.5Z" fill="#333"/><path d="M5.500,879H18.500A1.500,1.500 0 0 1 20,880.500V889.500A1.500,1.500 0 0 1 18.500,891H11.500L6.500,895L7.500,891H5.500A1.500,1.500 0 0 1 4,889.500V880.500A1.500,1.500 0 0 1 5.500,879Z" fill="#333"/><path d="M8,883.500H16" stroke="#f0f0f0" stroke-width="1.300"/><path d="M8,887H16" stroke="#aaa" stroke-width="1.600"/><path d="M0,895A5,5 0 0 0 5,900H0Z" fill="#555"/></svg>
<!-- s_right -->
<div style="position:absolute;left:1103px;top:134px;width:16px;height:750px;background:#c9c9c9;"></div><div style="position:absolute;left:1119px;top:110px;width:2px;height:790px;background:#9c9c9c;"></div><div style="position:absolute;left:1104.5px;top:502.7px;width:12.8px;height:70px;background:#2e2e2e;border-radius:6.400px;"></div><div style="position:absolute;left:1121px;top:110px;width:319px;height:790px;background:#c3c3c3;"></div><div style="position:absolute;left:1121px;top:111px;width:319px;height:24px;background:#a9a9a9;"></div><div style="position:absolute;left:1121px;top:134px;width:319px;height:1px;background:#989898;"></div><div style="position:absolute;left:1165px;top:113px;width:72.5px;height:22px;background:#c3c3c3;"></div><div style="position:absolute;left:1180px;top:117.8px;white-space:nowrap;font-size:11px;line-height:15px;color:#111;font-weight:400;letter-spacing:0.081px;">Layers</div><div style="position:absolute;left:1126px;top:145px;width:295px;height:27px;background:#b9d6fe;border-radius:6px;"></div><div style="position:absolute;left:1132px;top:149px;width:16px;height:19px;background:#8565b4;border:1px solid #6f529c;box-sizing:border-box;"></div><div style="position:absolute;left:1173px;top:148.5px;width:20px;height:19.5px;background-color:#eee;background-image:linear-gradient(45deg,#cfcfcf 25%,transparent 25%,transparent 75%,#cfcfcf 75%),linear-gradient(45deg,#cfcfcf 25%,transparent 25%,transparent 75%,#cfcfcf 75%);background-size:10px 10px;background-position:0 0,5px 5px;"></div><div style="position:absolute;left:1197px;top:151.0px;white-space:nowrap;font-size:11px;line-height:15px;color:#111;font-weight:400;letter-spacing:-0.241px;">Layer 1</div><div style="position:absolute;left:1424px;top:145.5px;width:10px;height:112px;background:#b4b4b4;border-radius:5px;box-shadow:inset 0 0 0 0.500px #bdbdbd;"></div><div style="position:absolute;left:1126px;top:263px;width:308px;height:1px;background:#adadad;"></div><div style="position:absolute;left:1125.5px;top:269px;width:309.5px;height:20px;background:#dcdcdc;border-radius:5px;"></div><div style="position:absolute;left:1149.5px;top:272.5px;white-space:nowrap;font-size:11px;line-height:15px;color:#8c8c8c;font-weight:400;letter-spacing:0.108px;">Search</div><div style="position:absolute;left:1121px;top:337px;width:319px;height:24px;background:#a9a9a9;"></div><div style="position:absolute;left:1121px;top:360px;width:319px;height:1px;background:#989898;"></div><div style="position:absolute;left:1165px;top:339px;width:66px;height:22px;background:#c3c3c3;"></div><div style="position:absolute;left:1180.5px;top:343.7px;white-space:nowrap;font-size:11px;line-height:15px;color:#111;font-weight:400;letter-spacing:0.043px;">Color</div><div style="position:absolute;left:1131.5px;top:394px;width:29px;height:28.5px;background:#fff;"></div><div style="position:absolute;left:1147.5px;top:377px;width:29.5px;height:29.5px;background:#c3c3c3;"></div><div style="position:absolute;left:1148.5px;top:378px;width:28px;height:28px;background:#fff;"></div><div style="position:absolute;left:1185px;top:381.5px;white-space:nowrap;font-size:11px;line-height:15px;color:#111;font-weight:400;letter-spacing:0.000px;">C</div><div style="position:absolute;left:1202px;top:384.2px;width:181.5px;height:7.6px;background:linear-gradient(90deg,#f79a7e 0%,#c99282 25%,#8a8c8c 46%,#3a7e8e 62%,#027a90 75%,#046f88 100%);box-shadow:inset 0 0 0 0.500px rgba(0,0,0,0.180);"></div><div style="position:absolute;left:1280.8px;top:381.8px;width:12.4px;height:12.4px;background:#141414;border-radius:50%;box-shadow:0 0 0 0.900px #f4f4f4;"></div><div style="position:absolute;left:1386.5px;top:377px;width:42.5px;height:22px;background:#e1e1e1;"></div><div style="position:absolute;left:1391px;top:381.5px;white-space:nowrap;font-size:11px;line-height:15px;color:#111;font-weight:400;letter-spacing:0.000px;">47</div><div style="position:absolute;left:1184px;top:407.5px;white-space:nowrap;font-size:11px;line-height:15px;color:#111;font-weight:400;letter-spacing:0.000px;">M</div><div style="position:absolute;left:1202px;top:410.2px;width:181.5px;height:7.6px;background:linear-gradient(90deg,#5ecaa0 0%,#6fb898 20%,#8a8a8c 40%,#8a4470 65%,#8e0862 88%,#8c0060 100%);box-shadow:inset 0 0 0 0.500px rgba(0,0,0,0.180);"></div><div style="position:absolute;left:1266.5px;top:407.8px;width:12.4px;height:12.4px;background:#141414;border-radius:50%;box-shadow:0 0 0 0.900px #f4f4f4;"></div><div style="position:absolute;left:1386.5px;top:403px;width:42.5px;height:22px;background:#e1e1e1;"></div><div style="position:absolute;left:1391px;top:407.5px;white-space:nowrap;font-size:11px;line-height:15px;color:#111;font-weight:400;letter-spacing:0.000px;">38</div><div style="position:absolute;left:1185px;top:433.5px;white-space:nowrap;font-size:11px;line-height:15px;color:#111;font-weight:400;letter-spacing:0.000px;">Y</div><div style="position:absolute;left:1202px;top:436.2px;width:181.5px;height:7.6px;background:linear-gradient(90deg,#7c7cc4 0%,#8080b0 20%,#8a8a8a 42%,#8a8a50 70%,#8c8c2c 90%,#888828 100%);box-shadow:inset 0 0 0 0.500px rgba(0,0,0,0.180);"></div><div style="position:absolute;left:1266.8px;top:433.8px;width:12.4px;height:12.4px;background:#141414;border-radius:50%;box-shadow:0 0 0 0.900px #f4f4f4;"></div><div style="position:absolute;left:1386.5px;top:429px;width:42.5px;height:22px;background:#e1e1e1;"></div><div style="position:absolute;left:1391px;top:433.5px;white-space:nowrap;font-size:11px;line-height:15px;color:#111;font-weight:400;letter-spacing:0.000px;">39</div><div style="position:absolute;left:1185px;top:459.5px;white-space:nowrap;font-size:11px;line-height:15px;color:#111;font-weight:400;letter-spacing:0.000px;">K</div><div style="position:absolute;left:1202px;top:462.2px;width:181.5px;height:7.6px;background:linear-gradient(90deg,#8c8c8c 0%,#666 25%,#3c3c3c 60%,#1e1e1e 100%);box-shadow:inset 0 0 0 0.500px rgba(0,0,0,0.180);"></div><div style="position:absolute;left:1206.3px;top:459.8px;width:12.4px;height:12.4px;background:#141414;border-radius:50%;box-shadow:0 0 0 0.900px #f4f4f4;"></div><div style="position:absolute;left:1386.5px;top:455px;width:42.5px;height:22px;background:#e1e1e1;"></div><div style="position:absolute;left:1391px;top:459.5px;white-space:nowrap;font-size:11px;line-height:15px;color:#111;font-weight:400;letter-spacing:0.000px;">3</div><div style="position:absolute;left:1182.5px;top:488.5px;width:22.5px;height:17.5px;background:#fff;"></div><div style="position:absolute;left:1206.5px;top:487.5px;width:24px;height:19px;background:#000;border:1px solid #444;border-radius:2px;box-sizing:border-box;"></div><div style="position:absolute;left:1231.5px;top:487.5px;width:24px;height:19px;background:#fff;border:1px solid #555;border-radius:2px;box-sizing:border-box;"></div><div style="position:absolute;left:1221px;top:519px;width:120px;height:120px;border-radius:50%;background:conic-gradient(from 90deg,#f00,#f0f,#00f,#0ff,#0f0,#ff0,#f00);"></div><div style="position:absolute;left:1233px;top:531px;width:96px;height:96px;border-radius:50%;background:#c3c3c3;"></div><div style="position:absolute;left:1252.5px;top:550.5px;width:57px;height:57px;border-radius:1px;background:linear-gradient(to bottom,rgba(0,0,0,0) 0%,#000 100%),linear-gradient(to right,#fff 0%,#00b2ff 65%,#00b2ff 100%);"></div><div style="position:absolute;left:1141.5px;top:652.0px;white-space:nowrap;font-size:11px;line-height:15px;color:#111;font-weight:400;letter-spacing:0.316px;">Opacity</div><div style="position:absolute;left:1190px;top:654.5px;width:172px;height:7.5px;background:#b6b6b6;border-radius:4px;box-shadow:inset 0 0 0 0.600px #a2a2a2;"></div><div style="position:absolute;left:1355px;top:651.5px;width:13.5px;height:13.5px;background:#fff;border-radius:50%;box-shadow:0 0 1px rgba(0,0,0,0.500);"></div><div style="position:absolute;left:1373px;top:648px;width:56px;height:20px;background:#e1e1e1;"></div><div style="position:absolute;left:1377px;top:652.0px;white-space:nowrap;font-size:11px;line-height:15px;color:#111;font-weight:400;letter-spacing:-0.533px;">100%</div><div style="position:absolute;left:1131px;top:673px;width:298px;height:21.5px;background:#aeaeae;border:1px solid #a2a2a2;box-sizing:border-box;"></div><div style="position:absolute;left:1121px;top:706px;width:319px;height:22.5px;background:#a9a9a9;"></div><div style="position:absolute;left:1121px;top:727.5px;width:319px;height:1px;background:#989898;"></div><div style="position:absolute;left:1165px;top:707.5px;width:101.5px;height:21.0px;background:#c3c3c3;"></div><div style="position:absolute;left:1180.5px;top:711.5px;white-space:nowrap;font-size:11px;line-height:15px;color:#111;font-weight:400;letter-spacing:0.168px;">Appearance</div><div style="position:absolute;left:1282px;top:712.0px;white-space:nowrap;font-size:11px;line-height:15px;color:#555;font-weight:400;letter-spacing:0.222px;">Transparency</div><div style="position:absolute;left:1369px;top:712.0px;white-space:nowrap;font-size:11px;line-height:15px;color:#555;font-weight:400;letter-spacing:-0.045px;">Link</div><div style="position:absolute;left:1410px;top:712.0px;white-space:nowrap;font-size:11px;line-height:15px;color:#555;font-weight:400;letter-spacing:0.000px;">Shap</div><div style="position:absolute;left:1391px;top:707.5px;width:18px;height:19px;background:#d2d2d2;border-radius:3px;"></div><div style="position:absolute;left:1162px;top:741px;width:24px;height:23px;background:#fff;"></div><div style="position:absolute;left:1191.5px;top:745.0px;white-space:nowrap;font-size:11px;line-height:15px;color:#111;font-weight:400;letter-spacing:0.186px;">Image</div><div style="position:absolute;left:1174.5px;top:773.0px;white-space:nowrap;font-size:11px;line-height:15px;color:#111;font-weight:400;letter-spacing:0.186px;">Image</div><div style="position:absolute;left:1219px;top:771px;width:62px;height:18.5px;background:#cfcfcf;"></div><div style="position:absolute;left:1286.5px;top:771px;width:79.5px;height:18.5px;background:#cfcfcf;"></div><div style="position:absolute;left:1294px;top:774.5px;white-space:nowrap;font-size:11px;line-height:15px;color:#111;font-weight:400;letter-spacing:0.000px;">0°</div><div style="position:absolute;left:1174.5px;top:801.0px;white-space:nowrap;font-size:11px;line-height:15px;color:#111;font-weight:400;letter-spacing:0.244px;">Opacity</div><div style="position:absolute;left:1278.5px;top:799px;width:65.5px;height:19px;background:#e1e1e1;"></div><div style="position:absolute;left:1344px;top:799px;width:13px;height:19px;background:#cfcfcf;"></div><div style="position:absolute;left:1282.5px;top:802.5px;white-space:nowrap;font-size:11px;line-height:15px;color:#111;font-weight:400;letter-spacing:-0.533px;">100%</div><div style="position:absolute;left:1365px;top:798.5px;width:20px;height:20px;background-color:#e8e8e8;background-image:linear-gradient(45deg,#cdcdcd 25%,transparent 25%,transparent 75%,#cdcdcd 75%),linear-gradient(45deg,#cdcdcd 25%,transparent 25%,transparent 75%,#cdcdcd 75%);background-size:10px 10px;background-position:0 0,5px 5px;"></div><div style="position:absolute;left:1414px;top:739px;width:10.5px;height:137.5px;background:#b4b4b4;border-radius:5px;box-shadow:inset 0 0 0 0.500px #bdbdbd;"></div><div style="position:absolute;left:1131px;top:888px;width:294px;height:1px;background:#adadad;"></div><svg style="position:absolute;left:0px;top:0px;overflow:visible;" width="1440" height="900" viewBox="0 0 1440 900"><path d="M1104.500,150.500L1110.500,144.500L1116.500,150.500M1104.500,872L1110.500,878L1116.500,872" fill="none" stroke="#111" stroke-width="1.400"/><circle cx="1137" cy="123.5" r="6.500" fill="#c8c8c8"/><path d="M1134,120.5L1140,126.5M1140,120.5L1134,126.5" stroke="#333" stroke-width="1.100"/><path d="M1153,117.0V130.0M1157.500,117.0V130.0" stroke="#7e7e7e" stroke-width="2"/><path d="M1418,118.5H1430.500M1418,121.8H1430.500M1418,125.2H1430.500M1418,128.5H1430.500" stroke="#333" stroke-width="1"/><path d="M1224,120.500L1230,126.500M1230,120.500L1224,126.500" stroke="#333" stroke-width="1"/><path d="M1157,153.500L1164.500,158L1157,162.500Z" fill="#222"/><path d="M1177,149C1179.500,152 1178,156 1184,157.500" fill="none" stroke="#5cc8ee" stroke-width="1.200"/><path d="M1180.500,160C1181.500,163.500 1184,165 1189,164" fill="none" stroke="#5cdcee" stroke-width="1"/><rect x="1369.5" y="158.0" width="7.500" height="6.500" fill="none" stroke="#333" stroke-width="1"/><path d="M1365.5,159.5V155.5A2.600,2.600 0 0 1 1370.7,155.5V158.0" fill="none" stroke="#333" stroke-width="1"/><path d="M1382.5,158C1385.5,153 1392.5,153 1395.5,158C1392.5,163 1385.5,163 1382.5,158Z" fill="none" stroke="#333" stroke-width="1"/><circle cx="1389" cy="158" r="2.200" fill="none" stroke="#333" stroke-width="1"/><circle cx="1389" cy="158" r="0.800" fill="#333"/><circle cx="1407" cy="158" r="5.500" fill="none" stroke="#222" stroke-width="1"/><circle cx="1140" cy="277.500" r="3.800" fill="none" stroke="#222" stroke-width="1.200"/><path d="M1137.300,280.500L1132.500,285" stroke="#222" stroke-width="1.400"/><circle cx="1419.500" cy="278" r="5.300" fill="none" stroke="#222" stroke-width="1.200"/><path d="M1417.300,275.800L1421.700,280.200M1421.700,275.800L1417.300,280.200" stroke="#222" stroke-width="1.200"/><path d="M1423.500,282L1426.500,285" stroke="#222" stroke-width="1.400"/><g transform="translate(1173,315)"><path d="M-8,-3H8M-8,3H8" stroke="#8e8e8e" stroke-width="1.100"/><circle cx="-2.500" cy="-3" r="2.200" fill="#c3c3c3" stroke="#8e8e8e" stroke-width="1.100"/><circle cx="3" cy="3" r="2.200" fill="#c3c3c3" stroke="#8e8e8e" stroke-width="1.100"/></g><g transform="translate(1201,315)"><rect x="-8" y="-3" width="10.500" height="10.500" rx="1" fill="none" stroke="#8e8e8e" stroke-width="1.200"/><path d="M-3.500,-3V-7.500H7.500V3.500H2.500" fill="none" stroke="#8e8e8e" stroke-width="1.200"/></g><g transform="translate(1229,315)"><circle r="8" fill="#8e8e8e"/><rect x="-4" y="-4" width="5.500" height="5.500" fill="none" stroke="#c3c3c3" stroke-width="1.100"/><rect x="-1" y="-1" width="5.500" height="5.500" fill="none" stroke="#c3c3c3" stroke-width="1.100"/></g><g transform="translate(1257,315)"><rect x="-8" y="-8" width="16" height="16" fill="none" stroke="#8e8e8e" stroke-width="1"/><rect x="-4" y="-4" width="5.500" height="5.500" fill="none" stroke="#8e8e8e" stroke-width="1"/><rect x="-1.500" y="-1.500" width="5.500" height="5.500" fill="none" stroke="#8e8e8e" stroke-width="1"/></g><g transform="translate(1285,315)"><path d="M-4.500,-8.500V4.500H8.500M-8.500,-4.500H4.500V8.500" fill="none" stroke="#8e8e8e" stroke-width="1.100"/><rect x="-8" y="-8" width="16" height="16" fill="none" stroke="#8e8e8e" stroke-width="0.700"/></g><g transform="translate(1313,315)"><rect x="-8" y="-8.500" width="16" height="17" rx="1" fill="#8e8e8e"/></g><g transform="translate(1341,315)"><path d="M-8.500,-5H-4.500L-3,-7.500H3L4.500,-5H8.500V7H-8.500Z" fill="#8e8e8e"/><circle cx="0" cy="1" r="3.500" fill="#c3c3c3"/><circle cx="0" cy="1" r="2" fill="#8e8e8e"/></g><g transform="translate(1369,315)"><path d="M-4,-5V-8.500H9V4.500H5.500" fill="none" stroke="#2a2a2a" stroke-width="1.800"/><rect x="-8.500" y="-4.500" width="13" height="13" rx="1" fill="#2a2a2a"/><path d="M-2,-1.500V5.500M-5.500,2H1.500" stroke="#ddd" stroke-width="1.200"/></g><g transform="translate(1397,315)"><rect x="-8.500" y="-9" width="17" height="18" rx="2.500" fill="#8e8e8e"/><path d="M-5,2L0,-0.500L5,2L0,4.500Z" fill="#c3c3c3"/><path d="M-5,-1L0,-3.500L5,-1" fill="none" stroke="#c3c3c3" stroke-width="0.900"/><path d="M3.500,-5.500V-2.500M2,-4H5" stroke="#c3c3c3" stroke-width="0.800"/></g><g transform="translate(1425,315)"><path d="M-6,-4.500H6L5,8.500H-5Z" fill="none" stroke="#8e8e8e" stroke-width="1.200"/><path d="M-7.500,-5.500H7.500M-2.500,-5.500V-8H2.500V-5.500M-2.500,-2V6M0,-2V6M2.500,-2V6" stroke="#8e8e8e" stroke-width="1"/></g><circle cx="1137" cy="349.5" r="6.500" fill="#c8c8c8"/><path d="M1134,346.5L1140,352.5M1140,346.5L1134,352.5" stroke="#333" stroke-width="1.100"/><path d="M1153,343.0V356.0M1157.500,343.0V356.0" stroke="#7e7e7e" stroke-width="2"/><path d="M1418,344.5H1430.500M1418,347.8H1430.500M1418,351.2H1430.500M1418,354.5H1430.500" stroke="#333" stroke-width="1"/><path d="M1170.300,348.800L1172.700,346.400L1175.100,348.800M1170.300,352.200L1172.700,354.600L1175.100,352.200" fill="none" stroke="#222" stroke-width="1.100"/><path d="M1217.500,346.500L1223.500,352.500M1223.500,346.500L1217.500,352.500" stroke="#333" stroke-width="1"/><path d="M1175.500,378.500L1132.500,421" stroke="#ff1c1c" stroke-width="1.300"/><rect x="1155.500" y="385.500" width="13" height="13" fill="#c2c2c2"/><path d="M1133.500,389V383.500Q1133.500,380.500 1136.500,380.500H1141" fill="none" stroke="#222" stroke-width="1.400"/><path d="M1140.500,377.500L1144.500,380.500L1140.500,383.500ZM1130.500,388L1133.500,392L1136.500,388Z" fill="#222"/><circle cx="1140.700" cy="497" r="9" fill="#9e9e9e" stroke="#555" stroke-width="1"/><path d="M1136,502L1136.500,499.500L1142,494L1144,496L1138.500,501.500Z" fill="none" stroke="#222" stroke-width="0.900"/><path d="M1141.500,493L1145,496.500" stroke="#222" stroke-width="1.400"/><path d="M1143.500,494.500L1146,491.500" stroke="#222" stroke-width="2.600" stroke-linecap="round"/><circle cx="1163" cy="497" r="9" fill="#c8c8c8" stroke="#fff" stroke-width="1.100"/><path d="M1183,505.500L1204.500,489" stroke="#ff1c1c" stroke-width="1.300"/><rect x="1225.500" y="591.500" width="7" height="7" fill="none" stroke="#fff" stroke-width="1.600"/><rect x="1225.500" y="591.500" width="7" height="7" fill="none" stroke="#222" stroke-width="0.800" stroke-dasharray="2,1.500"/><rect x="1249.500" y="576.500" width="7" height="7" fill="none" stroke="#fff" stroke-width="1.600"/><rect x="1249.500" y="576.500" width="7" height="7" fill="none" stroke="#333" stroke-width="0.800" stroke-dasharray="2,1.500"/><circle cx="1137" cy="717" r="6.500" fill="#c8c8c8"/><path d="M1134,714L1140,720M1140,714L1134,720" stroke="#333" stroke-width="1.100"/><path d="M1153,710.5V723.5M1157.500,710.5V723.5" stroke="#7e7e7e" stroke-width="2"/><path d="M1418,712H1430.500M1418,715.3H1430.500M1418,718.7H1430.500M1418,722H1430.500" stroke="#333" stroke-width="1"/><path d="M1252.500,714L1258.500,720M1258.500,714L1252.500,720" stroke="#333" stroke-width="1"/><path d="M1397.500,714L1402.500,716.500L1397.500,719Z" fill="#222"/><path d="M1143.500,748.500H1152.500L1148,756.500Z" fill="#333"/><path d="M1169,748C1169.500,751 1170,753.500 1172,754.500M1172,754.500C1173.500,755 1175,755.500 1176.500,756.500" fill="none" stroke="#5ee8f4" stroke-width="0.900" stroke-dasharray="2,1"/><path d="M1372.8,752.5C1375.8,747.5 1382.8,747.5 1385.8,752.5C1382.8,757.5 1375.8,757.5 1372.8,752.5Z" fill="none" stroke="#333" stroke-width="1"/><circle cx="1379.3" cy="752.5" r="2.200" fill="none" stroke="#333" stroke-width="1"/><circle cx="1379.3" cy="752.5" r="0.800" fill="#333"/><rect x="1398.5" y="752.5" width="7.500" height="6.500" fill="none" stroke="#333" stroke-width="1"/><path d="M1394.5,754V750A2.600,2.600 0 0 1 1399.7,750V752.5" fill="none" stroke="#333" stroke-width="1"/><path d="M1157.500,775.500L1165,779.500L1157.500,783.500Z" fill="#333"/><path d="M1264.500,777.500L1270,783L1275.500,777.500M1349.500,777.500L1355,783L1360.500,777.500" fill="none" stroke="#222" stroke-width="1.200"/><rect x="1372.500" y="773.500" width="13" height="13" fill="#8a8a8a" stroke="#333" stroke-width="1"/><circle cx="1379" cy="780" r="4.800" fill="#c8c8c8" stroke="#333" stroke-width="0.800"/><path d="M1393.5,780C1396.5,775 1403.5,775 1406.5,780C1403.5,785 1396.5,785 1393.5,780Z" fill="none" stroke="#333" stroke-width="1"/><circle cx="1400" cy="780" r="2.200" fill="none" stroke="#333" stroke-width="1"/><circle cx="1400" cy="780" r="0.800" fill="#333"/><path d="M1347,806.500L1350.500,803L1354,806.500M1347,811L1350.500,814.500L1354,811" fill="none" stroke="#222" stroke-width="1.100"/><circle cx="1400" cy="808.500" r="4.800" fill="none" stroke="#444" stroke-width="0.900"/><path d="M1163,898.500H1177V901M1247,898.500H1261V901" fill="none" stroke="#3a3a3a" stroke-width="1.400"/><path d="M1199,900L1201.500,897L1204,900ZM1282,900L1284.500,897.500L1287,900ZM1391,900L1393.500,897L1396,900Z" fill="#3a3a3a"/><path d="M1227,898V900M1231.500,898V900" stroke="#3a3a3a" stroke-width="1.300"/><path d="M1355,901A6,4 0 0 1 1367,901M1411,901A5,3.500 0 0 1 1421,901" fill="none" stroke="#3a3a3a" stroke-width="1.300"/><path d="M1328,899H1333" stroke="#999" stroke-width="1.500"/><path d="M1440,894A6,6 0 0 1 1434,900H1440Z" fill="#555"/></svg><div style="position:absolute;left:1307.5px;top:307.0px;white-space:nowrap;font-size:12px;line-height:16px;color:#c3c3c3;font-weight:400;letter-spacing:0.000px;font-family:'Liberation Serif',serif;font-style:italic;">fx</div>
<!-- s_status -->
<div style="position:absolute;left:113px;top:884px;width:1006px;height:16px;background:#c9c9c9;"></div><div style="position:absolute;left:187px;top:884px;width:57px;height:16px;background:#c4c4c4;"></div><div style="position:absolute;left:245px;top:884px;width:31px;height:16px;background:#b4b4b4;"></div><div style="position:absolute;left:336px;top:884px;width:32px;height:16px;background:#b4b4b4;"></div><div style="position:absolute;left:120.5px;top:885.5px;white-space:nowrap;font-size:11px;line-height:15px;color:#111;font-weight:400;letter-spacing:-0.718px;">41.52%</div><div style="position:absolute;left:193px;top:885.5px;white-space:nowrap;font-size:11px;line-height:15px;color:#111;font-weight:400;letter-spacing:-0.172px;">0.0°</div><div style="position:absolute;left:287px;top:885.5px;white-space:nowrap;font-size:11px;line-height:15px;color:#111;font-weight:400;letter-spacing:0.000px;">1</div><div style="position:absolute;left:375px;top:885.5px;white-space:nowrap;font-size:11px;line-height:15px;color:#111;font-weight:400;letter-spacing:0.055px;">Artboard (150.0, 150.0)</div><div style="position:absolute;left:803px;top:886px;width:49px;height:13px;background:#2e2e2e;border-radius:6.500px;"></div><svg style="position:absolute;left:0px;top:0px;overflow:visible;" width="1440" height="900" viewBox="0 0 1440 900"><path d="M166,890L171.500,895.500L177,890M228,890L233.500,895.500L239,890M318,890L323.500,895.500L329,890M532,890L537.500,895.500L543,890" fill="none" stroke="#222" stroke-width="1.200"/><path d="M251,888V897" stroke="#222" stroke-width="1.600"/><path d="M259,888V897L252.500,892.500Z" fill="#222"/><path d="M274,888V897L266.500,892.500Z" fill="#222"/><path d="M338.500,888V897L346,892.500Z" fill="#222"/><path d="M353,888V897L359.500,892.500Z" fill="#222"/><path d="M361,888V897" stroke="#222" stroke-width="1.600"/><rect x="552" y="885.500" width="13.500" height="13.500" rx="2" fill="#8c4fb0"/><path d="M555,888.500H562.500" stroke="#fff" stroke-width="1.200"/><path d="M558.700,890V896M556,893.500L558.700,896.500L561.500,893.500" fill="none" stroke="#fff" stroke-width="1.200"/><path d="M580,887L574,892.500L580,898" fill="none" stroke="#111" stroke-width="1.500"/><path d="M1089,887L1095,892.500L1089,898" fill="none" stroke="#111" stroke-width="1.500"/><rect x="1105" y="887" width="11" height="11" fill="none" stroke="#333" stroke-width="1" stroke-dasharray="4,1.500"/><path d="M1110.500,885V889M1110.500,896V900M1103,892.500H1107M1114,892.500H1118" stroke="#333" stroke-width="0.900"/></svg>
</div></body></html>
